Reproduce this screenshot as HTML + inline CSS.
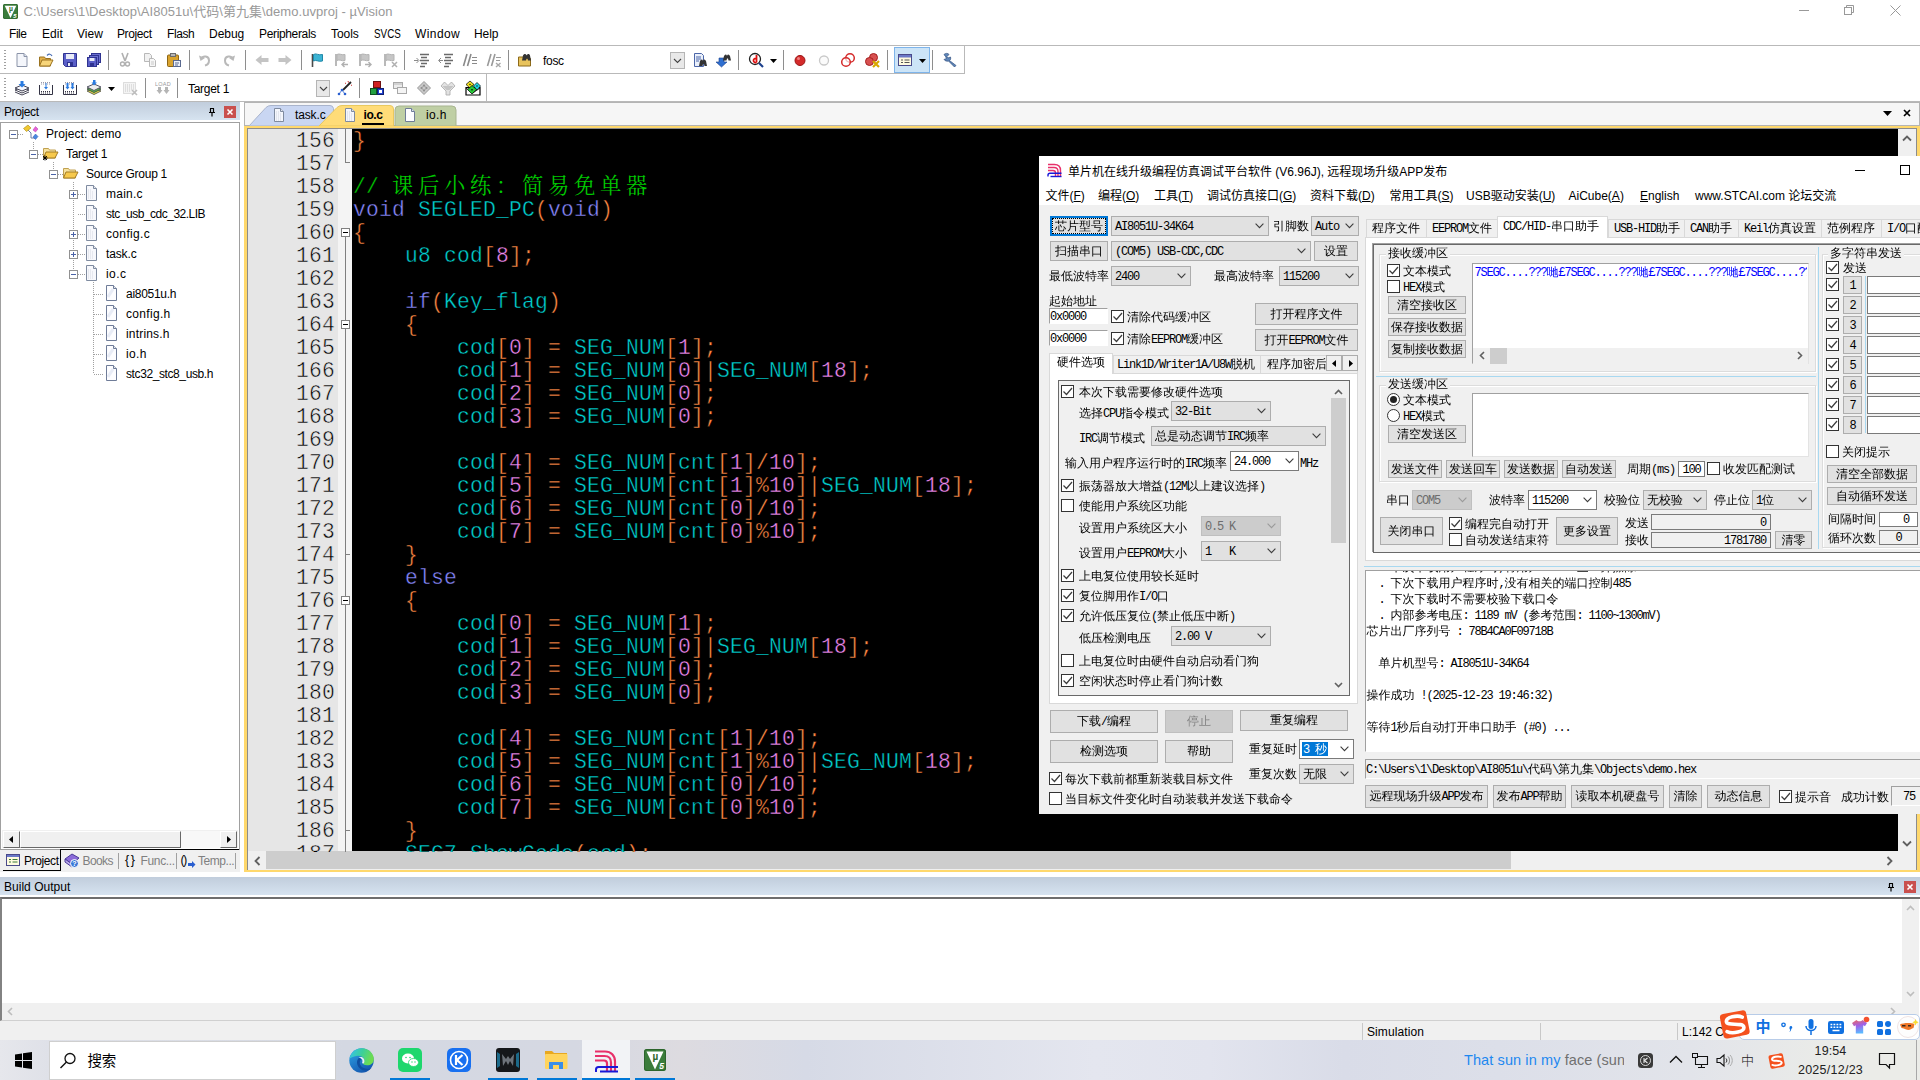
<!DOCTYPE html>
<html lang="zh"><head><meta charset="utf-8"><title>uVision</title>
<style>
*{box-sizing:border-box;margin:0;padding:0}
html,body{width:1920px;height:1080px;overflow:hidden;background:#f0f0f0}
body{position:relative;font-family:"Liberation Sans","Noto Sans CJK SC",sans-serif;font-size:12px;color:#000}
.a{position:absolute}
.t{position:absolute;white-space:pre;line-height:16px;height:16px;letter-spacing:-.3px}
.s{letter-spacing:0;font-family:"Liberation Mono","WenQuanYi Zen Hei","Noto Sans CJK SC",monospace;font-size:12px}
.s i{font-style:normal;font-family:"Liberation Mono",monospace;font-size:12px;letter-spacing:-1.2px}
.y{letter-spacing:0;font-family:"Liberation Sans","Noto Sans CJK SC",sans-serif;font-size:12px}
.btn{position:absolute;background:#e1e1e1;border:1px solid #adadad;text-align:center;white-space:pre;overflow:hidden}
.btn.dis{background:#cccccc;border-color:#bfbfbf;color:#838383}
.cmb{position:absolute;background:#e1e1e1;border:1px solid #adadad;white-space:pre;overflow:hidden}
.cmb.w{background:#fff;border-color:#7a7a7a}
.cmb.dis{background:#cccccc;border-color:#bfbfbf;color:#6d6d6d}
.cmb svg{position:absolute;right:4px;top:50%;margin-top:-3px}
.cb{position:absolute;width:13px;height:13px;background:#fff;border:1px solid #333}
.cb svg{position:absolute;left:0;top:0}
.rd{position:absolute;width:13px;height:13px;background:#fff;border:1px solid #333;border-radius:50%}
.ed{position:absolute;background:#fff;border:1px solid #7a7a7a;white-space:pre;overflow:hidden}
.code{position:absolute;white-space:pre;font-family:"Liberation Mono","Noto Serif CJK SC",monospace;font-size:21.33px;letter-spacing:.2px;line-height:23px;height:23px}
.kw{color:#8888ff}.id{color:#00d0d0}.op{color:#ff8844}.nu{color:#f088f0}.cm{color:#00c800}
.cm b{font-weight:normal;letter-spacing:4.67px;-webkit-text-stroke:0 transparent}
.t.s{margin-top:1px}
.btn.s,.cmb.s,.ed.s{padding-top:1px}

</style></head>
<body>
<div class="a " style="left:0px;top:0px;width:1920px;height:102px;background:#fff"></div>
<svg class="a" style="left:3px;top:4px" width="15" height="15" viewBox="0 0 22 22"><rect width="22" height="22" rx="2.500" fill="#3b7c3b"/><rect x=".5" y=".5" width="21" height="21" rx="2.500" fill="none" stroke="#2d652d"/><path d="M2.500 2.500h17L11 20.500z" fill="#fff"/><text x="11.500" y="10.500" font-size="10" font-weight="bold" text-anchor="middle" fill="#2d652d" font-family="Liberation Sans">µ</text><text x="17.500" y="20" font-size="8.500" font-weight="bold" font-style="italic" text-anchor="middle" fill="#fff" font-family="Liberation Sans">5</text></svg>
<div class="t " style="left:23.5px;top:3.5px;color:#999;font-size:13px;letter-spacing:0.05px">C:\Users\1\Desktop\AI8051u\代码\第九集\demo.uvproj - µVision</div>
<svg class="a" style="left:1790px;top:0" width="130" height="22" viewBox="0 0 130 22"><g stroke="#999" stroke-width="1" fill="none"><path d="M9 10.5h10"/><rect x="54.5" y="7.5" width="7" height="7"/><path d="M56.5 7.5v-2h7v7h-2"/><path d="M100.500 5.500l10 10M110.500 5.500l-10 10"/></g></svg>
<div class="t " style="left:9px;top:26px;letter-spacing:-0.448px;">File</div>
<div class="t " style="left:42px;top:26px;letter-spacing:0.021px;">Edit</div>
<div class="t " style="left:77px;top:26px;letter-spacing:0.068px;">View</div>
<div class="t " style="left:117px;top:26px;letter-spacing:-0.393px;">Project</div>
<div class="t " style="left:167px;top:26px;letter-spacing:-0.398px;">Flash</div>
<div class="t " style="left:209px;top:26px;letter-spacing:-0.031px;">Debug</div>
<div class="t " style="left:259px;top:26px;letter-spacing:-0.345px;">Peripherals</div>
<div class="t " style="left:331px;top:26px;letter-spacing:-0.066px;">Tools</div>
<div class="t " style="left:374px;top:26px;letter-spacing:0px;transform:scaleX(.82);transform-origin:0 0;">SVCS</div>
<div class="t " style="left:415px;top:26px;letter-spacing:0.412px;">Window</div>
<div class="t " style="left:474px;top:26px;letter-spacing:-0.062px;">Help</div>
<div class="a " style="left:0px;top:45px;width:1920px;height:1px;background:#b9b9b9"></div>
<div class="a " style="left:0px;top:73px;width:965px;height:1px;background:#b9b9b9"></div>
<div class="a " style="left:964px;top:45px;width:1px;height:29px;background:#b9b9b9"></div>
<div class="a " style="left:0px;top:101px;width:1920px;height:1px;background:#b9b9b9"></div>
<div class="a " style="left:486px;top:74px;width:1px;height:28px;background:#b9b9b9"></div>
<div class="a " style="left:4px;top:50px;width:2px;height:20px;background:repeating-linear-gradient(#a0a0a0 0 1px,transparent 1px 3px)"></div>
<div class="a " style="left:4px;top:78px;width:2px;height:20px;background:repeating-linear-gradient(#a0a0a0 0 1px,transparent 1px 3px)"></div>
<div class="a " style="left:108px;top:50px;width:1px;height:20px;background:#8e8e8e"></div>
<div class="a " style="left:189px;top:50px;width:1px;height:20px;background:#8e8e8e"></div>
<div class="a " style="left:245px;top:50px;width:1px;height:20px;background:#8e8e8e"></div>
<div class="a " style="left:301px;top:50px;width:1px;height:20px;background:#8e8e8e"></div>
<div class="a " style="left:404px;top:50px;width:1px;height:20px;background:#8e8e8e"></div>
<div class="a " style="left:508px;top:50px;width:1px;height:20px;background:#8e8e8e"></div>
<div class="a " style="left:738px;top:50px;width:1px;height:20px;background:#8e8e8e"></div>
<div class="a " style="left:783px;top:50px;width:1px;height:20px;background:#8e8e8e"></div>
<div class="a " style="left:887px;top:50px;width:1px;height:20px;background:#8e8e8e"></div>
<div class="a " style="left:932px;top:50px;width:1px;height:20px;background:#8e8e8e"></div>
<div class="a " style="left:145px;top:78px;width:1px;height:20px;background:#8e8e8e"></div>
<div class="a " style="left:177px;top:78px;width:1px;height:20px;background:#8e8e8e"></div>
<div class="a " style="left:359px;top:78px;width:1px;height:20px;background:#8e8e8e"></div>
<svg class="a" style="left:14px;top:52px" width="16" height="16" viewBox="0 0 16 16"><path d="M3 1.5h7l3 3v10H3z" fill="#f4f6fb" stroke="#8a93a8"/><path d="M10 1.5v3h3" fill="#dfe4ef" stroke="#8a93a8"/></svg>
<svg class="a" style="left:38px;top:52px" width="16" height="16" viewBox="0 0 16 16"><path d="M1.5 5h5l1 1.5h5V14h-11z" fill="#e2b04a" stroke="#9b7320"/><path d="M1.5 14l2.5-6h11l-3 6z" fill="#f7d57a" stroke="#9b7320"/><path d="M9 3.5c2-2 4-1.5 5 .5" fill="none" stroke="#4a6fb5" stroke-width="1.2"/></svg>
<svg class="a" style="left:62px;top:52px" width="16" height="16" viewBox="0 0 16 16"><path d="M1.5 1.5h13v13h-11l-2-2z" fill="#5a5fc8" stroke="#2f3390"/><rect x="4" y="2" width="8" height="5" fill="#e9ecf7"/><rect x="5" y="10" width="6" height="4.5" fill="#2f3390"/><rect x="6" y="11" width="2" height="3" fill="#e9ecf7"/></svg>
<svg class="a" style="left:86px;top:52px" width="16" height="16" viewBox="0 0 16 16"><rect x="5.5" y="1.5" width="9" height="9" fill="#6a6fd0" stroke="#2f3390"/><rect x="3.5" y="3.5" width="9" height="9" fill="#6a6fd0" stroke="#2f3390"/><rect x="1.5" y="5.5" width="9" height="9" fill="#5a5fc8" stroke="#2f3390"/><rect x="3.5" y="6" width="5" height="3" fill="#e9ecf7"/><rect x="4" y="11" width="4" height="3.5" fill="#2f3390"/></svg>
<svg class="a" style="left:117px;top:52px" width="16" height="16" viewBox="0 0 16 16"><path d="M5 1l3 8M11 1L8 9" stroke="#b0b0b0" stroke-width="1.6" fill="none"/><circle cx="5.5" cy="12" r="2" fill="none" stroke="#b0b0b0" stroke-width="1.4"/><circle cx="10.5" cy="12" r="2" fill="none" stroke="#b0b0b0" stroke-width="1.4"/></svg>
<svg class="a" style="left:142px;top:52px" width="16" height="16" viewBox="0 0 16 16"><path d="M2.5 1.5h5l2 2v6h-7z" fill="#f1f1f1" stroke="#b8b8b8"/><path d="M7.5 6.5h4l2 2v6h-6z" fill="#f6f6f6" stroke="#b8b8b8"/><path d="M9 10h3M9 12h3" stroke="#c8c8c8"/></svg>
<svg class="a" style="left:166px;top:52px" width="16" height="16" viewBox="0 0 16 16"><rect x="1.5" y="3" width="11" height="11.5" rx="1" fill="#d9a32d" stroke="#8d6514"/><rect x="4.5" y="1.5" width="5" height="3" fill="#b7b7b7" stroke="#6c6c6c"/><rect x="7.5" y="8.5" width="7" height="6" fill="#eef2fa" stroke="#5a6a90"/><path d="M9 11h4M9 13h3" stroke="#5a6a90"/></svg>
<svg class="a" style="left:197px;top:52px" width="16" height="16" viewBox="0 0 16 16"><path d="M4 7c2-4 8-3 8 1.5 0 3-2 4.5-4 5" fill="none" stroke="#b9b9b9" stroke-width="2"/><path d="M2 3.5l1.5 5.5 4.5-3z" fill="#b9b9b9"/></svg>
<svg class="a" style="left:221px;top:52px" width="16" height="16" viewBox="0 0 16 16"><path d="M12 7c-2-4-8-3-8 1.5 0 3 2 4.5 4 5" fill="none" stroke="#b9b9b9" stroke-width="2"/><path d="M14 3.5l-1.5 5.5-4.5-3z" fill="#b9b9b9"/></svg>
<svg class="a" style="left:254px;top:52px" width="16" height="16" viewBox="0 0 16 16"><path d="M1.5 8l6-5v3h7v4h-7v3z" fill="#c4c4c4"/></svg>
<svg class="a" style="left:277px;top:52px" width="16" height="16" viewBox="0 0 16 16"><path d="M14.5 8l-6-5v3h-7v4h7v3z" fill="#c4c4c4"/></svg>
<svg class="a" style="left:309px;top:52px" width="16" height="16" viewBox="0 0 16 16"><path d="M3.500 2v13" stroke="#4a4a4a" stroke-width="1.600"/><path d="M4.500 2.500c2.500-1.800 5 1.300 9 0v6.500c-4 1.300-6.500-1.800-9 0z" fill="#3cb4d4" stroke="#2088a8"/></svg>
<svg class="a" style="left:333px;top:52px" width="16" height="16" viewBox="0 0 16 16"><path d="M3 2v12" stroke="#a8a8a8" stroke-width="1.600"/><path d="M4 2.500c2.500-1.500 4.500 1 8 0v6c-3.500 1-5.500-1.500-8 0z" fill="#c6c6c6" stroke="#b4b4b4"/><path d="M15 12.500H9M11.500 10L9 12.500l2.500 2.500" stroke="#b0b0b0" stroke-width="1.400" fill="none"/></svg>
<svg class="a" style="left:357px;top:52px" width="16" height="16" viewBox="0 0 16 16"><path d="M3 2v12" stroke="#a8a8a8" stroke-width="1.600"/><path d="M4 2.500c2.500-1.500 4.500 1 8 0v6c-3.500 1-5.500-1.500-8 0z" fill="#c6c6c6" stroke="#b4b4b4"/><path d="M8 12.500h6M11.500 10l2.500 2.500-2.500 2.500" stroke="#b0b0b0" stroke-width="1.400" fill="none"/></svg>
<svg class="a" style="left:382px;top:52px" width="16" height="16" viewBox="0 0 16 16"><path d="M3 2v12" stroke="#a8a8a8" stroke-width="1.600"/><path d="M4 2.500c2.500-1.500 4.500 1 8 0v6c-3.500 1-5.500-1.500-8 0z" fill="#c6c6c6" stroke="#b4b4b4"/><path d="M10 10l5 5M15 10l-5 5" stroke="#b0b0b0" stroke-width="1.500"/></svg>
<svg class="a" style="left:414px;top:52px" width="16" height="16" viewBox="0 0 16 16"><path d="M6 2.500h9M7 5.500h6M6 8.500h9M7 11.500h6M6 14.500h5" stroke="#6a6a6a" stroke-width="1.300"/><path d="M0 8.500h4M2.500 6l2.500 2.500L2.500 11" stroke="#8a8a8a" fill="none"/></svg>
<svg class="a" style="left:438px;top:52px" width="16" height="16" viewBox="0 0 16 16"><path d="M6 2.500h9M7 5.500h6M6 8.500h9M7 11.500h6M6 14.500h5" stroke="#6a6a6a" stroke-width="1.300"/><path d="M5 8.500H1M3 6L.5 8.500 3 11" stroke="#8a8a8a" fill="none"/></svg>
<svg class="a" style="left:462px;top:52px" width="16" height="16" viewBox="0 0 16 16"><path d="M1.500 14l3.500-12M5.500 14l3.500-12" stroke="#8a8a8a" stroke-width="1.600"/><path d="M10 5.500h5M10 8.500h5M10 11.500h5" stroke="#8a8a8a" stroke-width="1.200"/></svg>
<svg class="a" style="left:486px;top:52px" width="16" height="16" viewBox="0 0 16 16"><path d="M1.500 14l3.500-12M5.500 14l3.500-12" stroke="#9a9a9a" stroke-width="1.600"/><path d="M10 5.500h5M10 8.500h4" stroke="#9a9a9a" stroke-width="1.200"/><path d="M10 11l4.500 4M14.500 11l-4.500 4" stroke="#a8a8a8" stroke-width="1.400"/></svg>
<svg class="a" style="left:517px;top:52px" width="16" height="16" viewBox="0 0 16 16"><path d="M1.500 5h5l1 1.500h6V14h-12z" fill="#e8c35c" stroke="#8d6a1a"/><path d="M6 3.500c1-2 3-2 3.500 0 1-2 3-2 3.500 0l1 5h-3l-.5-2h-1l-.5 2H5z" fill="#333"/></svg>
<div class="t " style="left:543px;top:53px;">fosc</div>
<div class="a " style="left:670px;top:52px;width:15px;height:17px;border:1px solid #b5b5b5;background:#e8e8e8"></div>
<svg class="a" style="left:673px;top:57.5px" width="9" height="6" viewBox="0 0 9 6"><path d="M1 1l3.500 3.500L8 1" fill="none" stroke="#444" stroke-width="1.1"/></svg>
<svg class="a" style="left:692px;top:52px" width="16" height="16" viewBox="0 0 16 16"><path d="M2.500 1.500h7l2 2v11h-9z" fill="#eaf0fb" stroke="#4c66a8"/><path d="M4 5h5M4 7h5M4 9h3" stroke="#4c66a8"/><path d="M8 9c1-2 2.500-2 3 0 .5-2 2-2 3 0l1 5h-2.500l-.5-2h-1l-.5 2H7z" fill="#333"/></svg>
<svg class="a" style="left:716px;top:52px" width="16" height="16" viewBox="0 0 16 16"><path d="M3 6h5v4h3l-5.500 5L0 10h3z" fill="#2f6fd0" stroke="#1b3f8c" stroke-width=".6"/><path d="M8 4c1-2 2.500-2 3 0 .5-2 2-2 3 0l1 4.500h-2.500l-.5-2h-1l-.5 2H7z" fill="#333"/></svg>
<svg class="a" style="left:748px;top:52px" width="16" height="16" viewBox="0 0 16 16"><circle cx="7" cy="7" r="5.500" fill="#fff" stroke="#222" stroke-width="1.300"/><path d="M11 11l4 4" stroke="#1b3f8c" stroke-width="2.200"/><path d="M8.500 3v7.500M8.500 10.500c-4 1-4-5 0-4" fill="none" stroke="#e01010" stroke-width="1.800"/></svg>
<svg class="a" style="left:769.5px;top:59px" width="7" height="4" viewBox="0 0 7 4"><path d="M0 0h7L3.500 4z" fill="#000"/></svg>
<svg class="a" style="left:792px;top:52px" width="16" height="16" viewBox="0 0 16 16"><circle cx="8" cy="8.500" r="5" fill="#d42a2a" stroke="#9a1414"/><circle cx="6.500" cy="6.500" r="1.500" fill="#f08080"/></svg>
<svg class="a" style="left:816px;top:52px" width="16" height="16" viewBox="0 0 16 16"><circle cx="8" cy="8.500" r="4.500" fill="#fbfbfb" stroke="#c9c9c9" stroke-width="1.300"/></svg>
<svg class="a" style="left:840px;top:52px" width="16" height="16" viewBox="0 0 16 16"><circle cx="10" cy="6" r="4.300" fill="#fff" stroke="#d42a2a" stroke-width="1.500"/><circle cx="6" cy="10" r="4.300" fill="#fff" fill-opacity=".7" stroke="#d42a2a" stroke-width="1.500"/></svg>
<svg class="a" style="left:864px;top:52px" width="16" height="16" viewBox="0 0 16 16"><circle cx="9.500" cy="5.500" r="4" fill="#d85050" stroke="#a52020"/><circle cx="5.500" cy="9.500" r="4" fill="#d85050" stroke="#a52020"/><path d="M9 9l6 6M15 9l-6 6" stroke="#d8a800" stroke-width="2.200"/></svg>
<div class="a " style="left:894px;top:47px;width:36px;height:26px;background:#cce4f7;border:1px solid #7eb4ea"></div>
<svg class="a" style="left:897px;top:52px" width="16" height="16" viewBox="0 0 16 16"><rect x="1.500" y="2.500" width="13" height="11" fill="#fffbe0" stroke="#4a4a8a"/><rect x="2" y="3" width="12" height="2.500" fill="#6a78c8"/><path d="M4 8h2M4 10.500h2M7.500 8h5M7.500 10.500h5" stroke="#555"/></svg>
<svg class="a" style="left:918.5px;top:59px" width="7" height="4" viewBox="0 0 7 4"><path d="M0 0h7L3.500 4z" fill="#000"/></svg>
<svg class="a" style="left:942px;top:52px" width="16" height="16" viewBox="0 0 16 16"><path d="M2 2.500c1.500-1.500 4-1.500 5 0L5 4.500l1 1.500 2.500-1c.5 1.500 0 3-1 3.500l6.500 5-1.500 1.500-6-6c-1.500.5-3.500 0-4.500-1.500l2.500-1-1-2z" fill="#5f86b8" stroke="#2f4f7f" stroke-width=".7"/></svg>
<svg class="a" style="left:14px;top:80px" width="16" height="16" viewBox="0 0 16 16"><path d="M1 10l7-3 7 3-7 3z" fill="#fff" stroke="#445"/><path d="M1 12l7 3 7-3" fill="none" stroke="#445"/><path d="M1 8l7-3 7 3-7 3z" fill="#f6f8ff" stroke="#445"/><path d="M6.500 1h3v3h2L8 7.500 4.500 4h2z" fill="#2a7be0"/></svg>
<svg class="a" style="left:38px;top:80px" width="16" height="16" viewBox="0 0 16 16"><path d="M1.500 5v9.500h13V5" fill="#fff" stroke="#334"/><path d="M3 11.500h10M3 13h10" stroke="#334" stroke-dasharray="1 1"/><path d="M3 2.500h10M3 4h10" stroke="#99a" stroke-dasharray="1 1"/><path d="M7.500 3v4h-1.500L8 9.500 10 7H8.500V3z" fill="#2a7be0"/></svg>
<svg class="a" style="left:62px;top:80px" width="16" height="16" viewBox="0 0 16 16"><path d="M1.500 5v9.500h13V5" fill="#fff" stroke="#334"/><path d="M3 11.500h10M3 13h10" stroke="#334" stroke-dasharray="1 1"/><path d="M3 2.500h10M3 4h10" stroke="#99a" stroke-dasharray="1 1"/><path d="M4.500 3v4H3.500L5.500 9.500 7.500 7h-1V3zM9.500 3v4h-1l2 2.500 2-2.500h-1V3z" fill="#2a7be0"/></svg>
<svg class="a" style="left:86px;top:80px" width="16" height="16" viewBox="0 0 16 16"><path d="M1 11l7 3.500 7-3.500-7-3z" fill="#e6e04a" stroke="#665"/><path d="M1 9l7 3.500L15 9 8 6z" fill="#58b848" stroke="#454"/><path d="M1 7l7 3.500L15 7 8 4z" fill="#eee" stroke="#556"/><path d="M7 0h2.500v2.500h1.500L8 5.500 5.500 2.500H7z" fill="#2a7be0"/></svg>
<svg class="a" style="left:107.5px;top:87px" width="7" height="4" viewBox="0 0 7 4"><path d="M0 0h7L3.500 4z" fill="#000"/></svg>
<svg class="a" style="left:122px;top:80px" width="16" height="16" viewBox="0 0 16 16"><path d="M1.500 2.500h12v11h-12z" fill="#f4f4f4" stroke="#c0c0c0" stroke-dasharray="1 1"/><path d="M3 5h9M3 7h9M3 9h9M3 11h6" stroke="#c8c8c8" stroke-dasharray="1 1"/><path d="M10 10l5 5M15 10l-5 5" stroke="#bdbdbd" stroke-width="1.600"/></svg>
<svg class="a" style="left:155px;top:80px" width="16" height="16" viewBox="0 0 16 16"><path d="M3 7h3v3h1.500L4.500 14 1.500 10H3zM10 7h3v3h1.500L11.500 14 8.500 10H10z" fill="#b5b5b5"/><text x="8" y="5.500" font-size="5.500" font-family="Liberation Sans" text-anchor="middle" fill="#9a9a9a" letter-spacing=".3">LOAD</text></svg>
<div class="t " style="left:188px;top:81px;letter-spacing:-0.294px;">Target 1</div>
<div class="a " style="left:316px;top:80px;width:14px;height:17px;border:1px solid #b5b5b5;background:#e8e8e8"></div>
<svg class="a" style="left:318.5px;top:85.5px" width="9" height="6" viewBox="0 0 9 6"><path d="M1 1l3.500 3.500L8 1" fill="none" stroke="#444" stroke-width="1.100"/></svg>
<svg class="a" style="left:337px;top:80px" width="16" height="16" viewBox="0 0 16 16"><path d="M14 2L6 10" stroke="#222" stroke-width="1.800"/><path d="M11 1l.5 1.500M14 5l1 .5M9 3.500l-1-.5" stroke="#d03030"/><circle cx="5" cy="10" r="1.300" fill="#2a5fd0"/><circle cx="2" cy="14" r="1.300" fill="#2a5fd0"/><circle cx="8" cy="14" r="1.300" fill="#2a5fd0"/><path d="M5 10l-3 4M5 10l3 4" stroke="#2a5fd0" stroke-width=".8"/></svg>
<svg class="a" style="left:369px;top:80px" width="16" height="16" viewBox="0 0 16 16"><rect x="4.500" y="1.500" width="7" height="6" fill="#d02020" stroke="#701010"/><rect x="1.500" y="8.500" width="6" height="6" fill="#20a040" stroke="#105020"/><rect x="8.500" y="8.500" width="6" height="6" fill="#2040d0" stroke="#102070"/><rect x="10" y="10" width="3" height="3" fill="#fff"/></svg>
<svg class="a" style="left:392px;top:80px" width="16" height="16" viewBox="0 0 16 16"><rect x="1.500" y="2.500" width="9" height="6" fill="#ececec" stroke="#a8a8a8"/><rect x="5.500" y="7.500" width="9" height="6" fill="#f4f4f4" stroke="#a8a8a8"/><path d="M2 4h8" stroke="#b8b8b8"/></svg>
<svg class="a" style="left:416px;top:80px" width="16" height="16" viewBox="0 0 16 16"><path d="M8 1.500l6.500 6.500L8 14.500 1.500 8z" fill="#c9c9c9" stroke="#9a9a9a"/><path d="M8 4l1.500 2.500h-3zM8 12l1.500-2.500h-3zM4 8l2.500-1.500v3zM12 8l-2.500-1.500v3z" fill="#8a8a8a"/></svg>
<svg class="a" style="left:440px;top:80px" width="16" height="16" viewBox="0 0 16 16"><path d="M1 6l3.500-4L8 5.500 11.500 2 15 6l-5 5v4H6v-4z" fill="#e2e2e2" stroke="#a8a8a8" stroke-width=".8"/><path d="M2.500 6h11l-4 4h-3z" fill="#c4c4c4"/></svg>
<svg class="a" style="left:465px;top:80px" width="16" height="16" viewBox="0 0 16 16"><path d="M1 7.500h14v7.500H1z" fill="#fff" stroke="#000" stroke-width="1.200"/><path d="M1 8l7 5 7-5" fill="none" stroke="#000" stroke-width=".8"/><path d="M5 1l4 3.500-4 3.500-4-3.500z" fill="#f0e020" stroke="#000" stroke-width=".7"/><path d="M12 2.500l3.500 3.500-3.500 4-3.500-4z" fill="#20d8e8" stroke="#000" stroke-width=".7"/><path d="M7 5.500l4.500 4-4.500 4.500-4.500-4.500z" fill="#28c838" stroke="#000" stroke-width=".7"/><circle cx="5" cy="4.500" r=".7"/><circle cx="12" cy="6" r=".7"/><circle cx="7" cy="9.700" r=".8"/></svg>
<div class="a " style="left:0px;top:102px;width:240px;height:18px;background:linear-gradient(#c1cddc,#d6e3f0)"></div>
<div class="a " style="left:0px;top:120px;width:240px;height:3px;background:#fff"></div>
<div class="t " style="left:4px;top:103.5px;letter-spacing:-0.393px;">Project</div>
<svg class="a" style="left:205.5px;top:106px" width="12" height="12" viewBox="0 0 12 12"><path d="M4 2.500h4M4.500 2.500v4M7.500 2.500v4M3 6.500h6M6 6.500v4" stroke="#000" stroke-width="1.200" fill="none"/></svg>
<div class="a " style="left:224px;top:106px;width:12px;height:12px;background:#c9504e"></div>
<svg class="a" style="left:226px;top:108px" width="8" height="8" viewBox="0 0 8 8"><path d="M1.500 1.500l5 5M6.500 1.500l-5 5" stroke="#fff" stroke-width="1.600"/></svg>
<div class="a " style="left:0px;top:122px;width:240px;height:728px;background:#fff;border:1px solid #a0a0a0"></div>
<div class="a " style="left:240px;top:102px;width:4px;height:775px;background:#fff"></div>
<div class="a " style="left:18px;top:134px;width:6px;height:1px;background:repeating-linear-gradient(90deg,#a0a0a0 0 1px,transparent 1px 2px)"></div>
<div class="a " style="left:33px;top:142px;width:1px;height:8px;background:repeating-linear-gradient(#a0a0a0 0 1px,transparent 1px 2px)"></div>
<div class="a " style="left:38px;top:154px;width:5px;height:1px;background:repeating-linear-gradient(90deg,#a0a0a0 0 1px,transparent 1px 2px)"></div>
<div class="a " style="left:53px;top:162px;width:1px;height:8px;background:repeating-linear-gradient(#a0a0a0 0 1px,transparent 1px 2px)"></div>
<div class="a " style="left:58px;top:174px;width:5px;height:1px;background:repeating-linear-gradient(90deg,#a0a0a0 0 1px,transparent 1px 2px)"></div>
<div class="a " style="left:73px;top:182px;width:1px;height:92px;background:repeating-linear-gradient(#a0a0a0 0 1px,transparent 1px 2px)"></div>
<div class="a " style="left:93px;top:282px;width:1px;height:92px;background:repeating-linear-gradient(#a0a0a0 0 1px,transparent 1px 2px)"></div>
<div class="a " style="left:78px;top:194px;width:7px;height:1px;background:repeating-linear-gradient(90deg,#a0a0a0 0 1px,transparent 1px 2px)"></div>
<div class="a " style="left:78px;top:214px;width:7px;height:1px;background:repeating-linear-gradient(90deg,#a0a0a0 0 1px,transparent 1px 2px)"></div>
<div class="a " style="left:78px;top:234px;width:7px;height:1px;background:repeating-linear-gradient(90deg,#a0a0a0 0 1px,transparent 1px 2px)"></div>
<div class="a " style="left:78px;top:254px;width:7px;height:1px;background:repeating-linear-gradient(90deg,#a0a0a0 0 1px,transparent 1px 2px)"></div>
<div class="a " style="left:78px;top:274px;width:7px;height:1px;background:repeating-linear-gradient(90deg,#a0a0a0 0 1px,transparent 1px 2px)"></div>
<div class="a " style="left:94px;top:294px;width:9px;height:1px;background:repeating-linear-gradient(90deg,#a0a0a0 0 1px,transparent 1px 2px)"></div>
<div class="a " style="left:94px;top:314px;width:9px;height:1px;background:repeating-linear-gradient(90deg,#a0a0a0 0 1px,transparent 1px 2px)"></div>
<div class="a " style="left:94px;top:334px;width:9px;height:1px;background:repeating-linear-gradient(90deg,#a0a0a0 0 1px,transparent 1px 2px)"></div>
<div class="a " style="left:94px;top:354px;width:9px;height:1px;background:repeating-linear-gradient(90deg,#a0a0a0 0 1px,transparent 1px 2px)"></div>
<div class="a " style="left:94px;top:374px;width:9px;height:1px;background:repeating-linear-gradient(90deg,#a0a0a0 0 1px,transparent 1px 2px)"></div>
<svg class="a" style="left:9px;top:130px" width="9" height="9" viewBox="0 0 9 9"><rect x=".5" y=".5" width="8" height="8" fill="#fff" stroke="#919191"/><path d="M2 4.500h5" stroke="#4b63a7"/></svg>
<svg class="a" style="left:29px;top:150px" width="9" height="9" viewBox="0 0 9 9"><rect x=".5" y=".5" width="8" height="8" fill="#fff" stroke="#919191"/><path d="M2 4.500h5" stroke="#4b63a7"/></svg>
<svg class="a" style="left:49px;top:170px" width="9" height="9" viewBox="0 0 9 9"><rect x=".5" y=".5" width="8" height="8" fill="#fff" stroke="#919191"/><path d="M2 4.500h5" stroke="#4b63a7"/></svg>
<svg class="a" style="left:23px;top:123.5px" width="16" height="17" viewBox="0 0 16 17"><path d="M4.500 5.500L8 9v5h4" fill="none" stroke="#6a7fa8" stroke-width="1"/><path d="M0.500 4.500L5 1l3 3-4.500 3.500z" fill="#f0c830" stroke="#a88a18" stroke-width=".6"/><path d="M10 6l2.500-3.500L15 5l-2.500 3z" fill="#e860d8" stroke="#b040a8" stroke-width=".5"/><path d="M10 13l2.500-3L15 12.500 12.500 15.500z" fill="#4a88e0" stroke="#2a58b0" stroke-width=".5"/></svg>
<div class="t " style="left:46px;top:126px;letter-spacing:0.096px;">Project: demo</div>
<svg class="a" style="left:43px;top:144.5px" width="16" height="16" viewBox="0 0 16 16"><path d="M.5 3.500h5l1 1.500h6V13H.5z" fill="#f6e2a0" stroke="#c0a050"/><path d="M.5 13l2.500-6h12l-3 6z" fill="#f7c94c" stroke="#a27c26"/><path d="M0 11l4 4M4 11l-4 4M2 10.500v5M-.5 13h5" stroke="#000" stroke-width=".9"/></svg>
<div class="t " style="left:66px;top:146px;letter-spacing:-0.294px;">Target 1</div>
<svg class="a" style="left:63px;top:164.5px" width="16" height="16" viewBox="0 0 16 16"><path d="M.5 3.500h5l1 1.500h6V13H.5z" fill="#f6e2a0" stroke="#c0a050"/><path d="M.5 13l2.500-6h12l-3 6z" fill="#f7c94c" stroke="#a27c26"/></svg>
<div class="t " style="left:86px;top:166px;letter-spacing:-0.263px;">Source Group 1</div>
<svg class="a" style="left:69px;top:190px" width="9" height="9" viewBox="0 0 9 9"><rect x=".5" y=".5" width="8" height="8" fill="#fff" stroke="#919191"/><path d="M2 4.500h5M4.500 2v5" stroke="#4b63a7"/></svg>
<svg class="a" style="left:83.5px;top:185px" width="15" height="16" viewBox="0 0 15 16"><path d="M2.500 .5h7l3 3v12h-10z" fill="#f7f8fc" stroke="#7f8ba0"/><path d="M9.500 .5v3h3" fill="#e6e9f0" stroke="#7f8ba0"/><path d="M4 5h4M4 7h6M4 9h6M4 11h6M4 13h6" stroke="#d6d9e2" stroke-dasharray="1 1"/></svg>
<div class="t " style="left:106px;top:186px;letter-spacing:0.251px;">main.c</div>
<svg class="a" style="left:83.5px;top:205px" width="15" height="16" viewBox="0 0 15 16"><path d="M2.500 .5h7l3 3v12h-10z" fill="#f7f8fc" stroke="#7f8ba0"/><path d="M9.500 .5v3h3" fill="#e6e9f0" stroke="#7f8ba0"/><path d="M4 5h4M4 7h6M4 9h6M4 11h6M4 13h6" stroke="#d6d9e2" stroke-dasharray="1 1"/></svg>
<div class="t " style="left:106px;top:206px;letter-spacing:-0.499px;">stc_usb_cdc_32.LIB</div>
<svg class="a" style="left:69px;top:230px" width="9" height="9" viewBox="0 0 9 9"><rect x=".5" y=".5" width="8" height="8" fill="#fff" stroke="#919191"/><path d="M2 4.500h5M4.500 2v5" stroke="#4b63a7"/></svg>
<svg class="a" style="left:83.5px;top:225px" width="15" height="16" viewBox="0 0 15 16"><path d="M2.500 .5h7l3 3v12h-10z" fill="#f7f8fc" stroke="#7f8ba0"/><path d="M9.500 .5v3h3" fill="#e6e9f0" stroke="#7f8ba0"/><path d="M4 5h4M4 7h6M4 9h6M4 11h6M4 13h6" stroke="#d6d9e2" stroke-dasharray="1 1"/></svg>
<div class="t " style="left:106px;top:226px;letter-spacing:0.349px;">config.c</div>
<svg class="a" style="left:69px;top:250px" width="9" height="9" viewBox="0 0 9 9"><rect x=".5" y=".5" width="8" height="8" fill="#fff" stroke="#919191"/><path d="M2 4.500h5M4.500 2v5" stroke="#4b63a7"/></svg>
<svg class="a" style="left:83.5px;top:245px" width="15" height="16" viewBox="0 0 15 16"><path d="M2.500 .5h7l3 3v12h-10z" fill="#f7f8fc" stroke="#7f8ba0"/><path d="M9.500 .5v3h3" fill="#e6e9f0" stroke="#7f8ba0"/><path d="M4 5h4M4 7h6M4 9h6M4 11h6M4 13h6" stroke="#d6d9e2" stroke-dasharray="1 1"/></svg>
<div class="t " style="left:106px;top:246px;letter-spacing:-0.129px;">task.c</div>
<svg class="a" style="left:69px;top:270px" width="9" height="9" viewBox="0 0 9 9"><rect x=".5" y=".5" width="8" height="8" fill="#fff" stroke="#919191"/><path d="M2 4.500h5" stroke="#4b63a7"/></svg>
<svg class="a" style="left:83.5px;top:265px" width="15" height="16" viewBox="0 0 15 16"><path d="M2.500 .5h7l3 3v12h-10z" fill="#f7f8fc" stroke="#7f8ba0"/><path d="M9.500 .5v3h3" fill="#e6e9f0" stroke="#7f8ba0"/><path d="M4 5h4M4 7h6M4 9h6M4 11h6M4 13h6" stroke="#d6d9e2" stroke-dasharray="1 1"/></svg>
<div class="t " style="left:106px;top:266px;letter-spacing:0.404px;">io.c</div>
<svg class="a" style="left:103.5px;top:285px" width="15" height="16" viewBox="0 0 15 16"><path d="M2.500 .5h7l3 3v12h-10z" fill="#fdfdff" stroke="#6f7c98"/><path d="M9.500 .5v3h3" fill="#e6e9f0" stroke="#6f7c98"/><path d="M4 12l5-8" stroke="#e8ecf6" stroke-width="3"/></svg>
<div class="t " style="left:126px;top:286px;letter-spacing:-0.29px;">ai8051u.h</div>
<svg class="a" style="left:103.5px;top:305px" width="15" height="16" viewBox="0 0 15 16"><path d="M2.500 .5h7l3 3v12h-10z" fill="#fdfdff" stroke="#6f7c98"/><path d="M9.500 .5v3h3" fill="#e6e9f0" stroke="#6f7c98"/><path d="M4 12l5-8" stroke="#e8ecf6" stroke-width="3"/></svg>
<div class="t " style="left:126px;top:306px;letter-spacing:0.324px;">config.h</div>
<svg class="a" style="left:103.5px;top:325px" width="15" height="16" viewBox="0 0 15 16"><path d="M2.500 .5h7l3 3v12h-10z" fill="#fdfdff" stroke="#6f7c98"/><path d="M9.500 .5v3h3" fill="#e6e9f0" stroke="#6f7c98"/><path d="M4 12l5-8" stroke="#e8ecf6" stroke-width="3"/></svg>
<div class="t " style="left:126px;top:326px;letter-spacing:0.184px;">intrins.h</div>
<svg class="a" style="left:103.5px;top:345px" width="15" height="16" viewBox="0 0 15 16"><path d="M2.500 .5h7l3 3v12h-10z" fill="#fdfdff" stroke="#6f7c98"/><path d="M9.500 .5v3h3" fill="#e6e9f0" stroke="#6f7c98"/><path d="M4 12l5-8" stroke="#e8ecf6" stroke-width="3"/></svg>
<div class="t " style="left:126px;top:346px;letter-spacing:0.347px;">io.h</div>
<svg class="a" style="left:103.5px;top:365px" width="15" height="16" viewBox="0 0 15 16"><path d="M2.500 .5h7l3 3v12h-10z" fill="#fdfdff" stroke="#6f7c98"/><path d="M9.500 .5v3h3" fill="#e6e9f0" stroke="#6f7c98"/><path d="M4 12l5-8" stroke="#e8ecf6" stroke-width="3"/></svg>
<div class="t " style="left:126px;top:366px;letter-spacing:-0.4px;">stc32_stc8_usb.h</div>
<div class="a " style="left:2px;top:830px;width:236px;height:18px;background:#f0f0f0"></div>
<div class="a " style="left:3px;top:831px;width:17px;height:17px;background:#f0f0f0;border:1px solid #fff;border-right-color:#696969;border-bottom-color:#696969"></div>
<svg class="a" style="left:8.5px;top:836px" width="4" height="7" viewBox="0 0 4 7"><path d="M4 0v7L0 3.500z" fill="#000"/></svg>
<div class="a " style="left:20px;top:831px;width:161px;height:17px;background:#f0f0f0;border:1px solid #fff;border-right-color:#696969;border-bottom-color:#696969"></div>
<div class="a " style="left:220px;top:831px;width:17px;height:17px;background:#f0f0f0;border:1px solid #fff;border-right-color:#696969;border-bottom-color:#696969"></div>
<svg class="a" style="left:226.5px;top:836px" width="4" height="7" viewBox="0 0 4 7"><path d="M0 0v7l4-3.500z" fill="#000"/></svg>
<div class="a " style="left:181px;top:831px;width:39px;height:17px;background:#f8f8f8"></div>
<div class="a " style="left:0px;top:850px;width:240px;height:22px;background:#f0f0f0"></div>
<div class="a " style="left:60px;top:849px;width:179px;height:1px;background:#000"></div>
<div class="a " style="left:3px;top:850px;width:58px;height:21px;background:#f0f0f0;border:1px solid #000;border-top:none;border-left:none"></div>
<svg class="a" style="left:6px;top:854px" width="14" height="12" viewBox="0 0 14 12"><rect x=".5" y=".5" width="13" height="11" fill="#fffbe0" stroke="#4a4a8a"/><rect x="1" y="1" width="12" height="2" fill="#6a78c8"/><path d="M3 5.500h2M3 8h2M6.500 5.500h5M6.500 8h5" stroke="#3a7a3a"/></svg>
<div class="t " style="left:24px;top:853px;letter-spacing:-0.393px;">Project</div>
<svg class="a" style="left:64px;top:852px" width="16" height="16" viewBox="0 0 16 16"><path d="M1 7l7-5 7 4-7 6z" fill="#8a6ad8" stroke="#4a3a98"/><path d="M1 7v3l7 5v-3z" fill="#b8a8e8" stroke="#4a3a98"/><circle cx="10.500" cy="11.500" r="4" fill="#3a78d8" stroke="#fff"/><text x="10.500" y="14" font-size="7" font-weight="bold" text-anchor="middle" fill="#fff" font-family="Liberation Sans">?</text></svg>
<div class="t " style="left:82.5px;top:853px;letter-spacing:-0.6px;color:#808080">Books</div>
<div class="a " style="left:118px;top:853px;width:1px;height:16px;background:#a0a0a0"></div>
<div class="t " style="left:125px;top:851.5px;font-size:12.500px;letter-spacing:1.500px">{}</div>
<div class="t " style="left:140.5px;top:853px;letter-spacing:-0.35px;color:#808080">Func...</div>
<div class="a " style="left:176px;top:853px;width:1px;height:16px;background:#a0a0a0"></div>
<div class="t " style="left:180.5px;top:851.5px;font-size:12px;letter-spacing:-1.200px">()</div>
<svg class="a" style="left:187.5px;top:860.5px" width="8" height="7" viewBox="0 0 8 7"><path d="M0 2h4V0l3.500 3.500L4 7V5H0z" fill="#2a5fd0"/></svg>
<div class="t " style="left:198px;top:853px;letter-spacing:-0.45px;color:#808080">Temp...</div>
<div class="a " style="left:235px;top:853px;width:1px;height:16px;background:#a0a0a0"></div>
<div class="a " style="left:244px;top:102px;width:1676px;height:24px;background:#f6f6f6;border:1px solid #b4b4b4"></div>
<svg class="a" style="left:244px;top:103px" width="230" height="23" viewBox="0 0 230 23"><path d="M5 23 L22 4.500 Q24 2.500 27 2.500 L86 2.500 Q89 2.500 89.500 5.500 L89.500 23 Z" fill="#c9d6f2" stroke="#a9b4cc"/><path d="M151 23 L151 7 Q151 3 155 3 L208 3 Q212 3 212 7 L212 23 Z" fill="#bfcfa4" stroke="#a8b590"/><path d="M75 23 L93 4.500 Q95 2.500 98 2.500 L146 2.500 Q149.500 2.500 149.500 6 L149.500 23 Z" fill="#ffdc78" stroke="#e8c860"/></svg>
<svg class="a" style="left:273px;top:107.5px" width="12" height="14" viewBox="0 0 12 14"><path d="M1.500 .5h6l3 3v10h-9z" fill="#f4f6fc" stroke="#7f8ba0"/><path d="M7.500 .5v3h3" fill="#e0e4ee" stroke="#7f8ba0"/><path d="M3 4h3M3 6h5M3 8h5M3 10h5M3 12h5" stroke="#d0d4e0" stroke-dasharray="1 1"/></svg>
<div class="t " style="left:295px;top:107px;letter-spacing:-0.129px;">task.c</div>
<svg class="a" style="left:344px;top:107.5px" width="12" height="14" viewBox="0 0 12 14"><path d="M1.500 .5h6l3 3v10h-9z" fill="#f4f6fc" stroke="#7f8ba0"/><path d="M7.500 .5v3h3" fill="#e0e4ee" stroke="#7f8ba0"/><path d="M3 4h3M3 6h5M3 8h5M3 10h5M3 12h5" stroke="#d0d4e0" stroke-dasharray="1 1"/></svg>
<div class="t " style="left:363.5px;top:107px;font-weight:bold;letter-spacing:-0.4px">io.c</div>
<div class="a " style="left:362px;top:123px;width:22px;height:1.5px;background:#000"></div>
<svg class="a" style="left:404px;top:107.5px" width="12" height="14" viewBox="0 0 12 14"><path d="M1.500 .5h6l3 3v10h-9z" fill="#fdfdff" stroke="#6f7c98"/><path d="M7.500 .5v3h3" fill="#e0e4ee" stroke="#6f7c98"/></svg>
<div class="t " style="left:426px;top:107px;letter-spacing:0.347px;">io.h</div>
<svg class="a" style="left:1883px;top:111px" width="9" height="5" viewBox="0 0 9 5"><path d="M0 0h9L4.500 5z" fill="#000"/></svg>
<svg class="a" style="left:1902.5px;top:109px" width="8" height="8" viewBox="0 0 8 8"><path d="M1 1l6 6M7 1L1 7" stroke="#000" stroke-width="1.700"/></svg>
<div class="a " style="left:244px;top:126px;width:1676px;height:746px;background:#ffd86c"></div>
<div class="a " style="left:247px;top:128px;width:1670px;height:742px;background:#fff;border:1px solid #8c8c8c"></div>
<div class="a " style="left:248px;top:129px;width:90px;height:723px;background:#e6e6e6"></div>
<div class="a " style="left:338px;top:129px;width:14px;height:723px;background:#f4f4f4"></div>
<div class="a " style="left:352px;top:129px;width:1546px;height:723px;background:#000"></div>
<div class="a " style="left:1898px;top:129px;width:18px;height:723px;background:#f0f0f0"></div>
<svg class="a" style="left:1902px;top:135px" width="10" height="7" viewBox="0 0 10 7"><path d="M1 5.500L5 1.500l4 4" fill="none" stroke="#606060" stroke-width="1.800"/></svg>
<svg class="a" style="left:1902px;top:839.5px" width="10" height="7" viewBox="0 0 10 7"><path d="M1 1.500l4 4 4-4" fill="none" stroke="#606060" stroke-width="1.800"/></svg>
<div class="a " style="left:248px;top:851px;width:1668px;height:19px;background:#f0f0f0"></div>
<div class="a " style="left:266px;top:851px;width:1245px;height:18px;background:#cdcdcd"></div>
<svg class="a" style="left:253.5px;top:855.5px" width="7" height="10" viewBox="0 0 7 10"><path d="M5.500 1l-4 4 4 4" fill="none" stroke="#606060" stroke-width="1.800"/></svg>
<svg class="a" style="left:1886px;top:855.5px" width="7" height="10" viewBox="0 0 7 10"><path d="M1.500 1l4 4-4 4" fill="none" stroke="#606060" stroke-width="1.800"/></svg>
<div class="a" style="left:248px;top:129px;width:1650px;height:723px;overflow:hidden">
<div class="code" style="left:48px;top:1px;color:#000;-webkit-text-stroke:.5px #e6e6e6">156</div>
<div class="code" style="left:105px;top:1px;-webkit-text-stroke:.4px #000"><span class="op">}</span></div>
<div class="code" style="left:48px;top:24px;color:#000;-webkit-text-stroke:.5px #e6e6e6">157</div>
<div class="code" style="left:48px;top:47px;color:#000;-webkit-text-stroke:.5px #e6e6e6">158</div>
<div class="code" style="left:105px;top:47px;-webkit-text-stroke:.4px #000"><span class="cm">// <b>课后小练：简易免单器</b></span></div>
<div class="code" style="left:48px;top:70px;color:#000;-webkit-text-stroke:.5px #e6e6e6">159</div>
<div class="code" style="left:105px;top:70px;-webkit-text-stroke:.4px #000"><span class="kw">void</span> <span class="id">SEGLED_PC</span><span class="op">(</span><span class="kw">void</span><span class="op">)</span></div>
<div class="code" style="left:48px;top:93px;color:#000;-webkit-text-stroke:.5px #e6e6e6">160</div>
<div class="code" style="left:105px;top:93px;-webkit-text-stroke:.4px #000"><span class="op">{</span></div>
<div class="code" style="left:48px;top:116px;color:#000;-webkit-text-stroke:.5px #e6e6e6">161</div>
<div class="code" style="left:105px;top:116px;-webkit-text-stroke:.4px #000">    <span class="id">u8</span> <span class="id">cod</span><span class="op">[</span><span class="nu">8</span><span class="op">]</span><span class="op">;</span></div>
<div class="code" style="left:48px;top:139px;color:#000;-webkit-text-stroke:.5px #e6e6e6">162</div>
<div class="code" style="left:48px;top:162px;color:#000;-webkit-text-stroke:.5px #e6e6e6">163</div>
<div class="code" style="left:105px;top:162px;-webkit-text-stroke:.4px #000">    <span class="kw">if</span><span class="op">(</span><span class="id">Key_flag</span><span class="op">)</span></div>
<div class="code" style="left:48px;top:185px;color:#000;-webkit-text-stroke:.5px #e6e6e6">164</div>
<div class="code" style="left:105px;top:185px;-webkit-text-stroke:.4px #000">    <span class="op">{</span></div>
<div class="code" style="left:48px;top:208px;color:#000;-webkit-text-stroke:.5px #e6e6e6">165</div>
<div class="code" style="left:105px;top:208px;-webkit-text-stroke:.4px #000">        <span class="id">cod</span><span class="op">[</span><span class="nu">0</span><span class="op">]</span> <span class="op">=</span> <span class="id">SEG_NUM</span><span class="op">[</span><span class="nu">1</span><span class="op">]</span><span class="op">;</span></div>
<div class="code" style="left:48px;top:231px;color:#000;-webkit-text-stroke:.5px #e6e6e6">166</div>
<div class="code" style="left:105px;top:231px;-webkit-text-stroke:.4px #000">        <span class="id">cod</span><span class="op">[</span><span class="nu">1</span><span class="op">]</span> <span class="op">=</span> <span class="id">SEG_NUM</span><span class="op">[</span><span class="nu">0</span><span class="op">]</span><span class="op">|</span><span class="id">SEG_NUM</span><span class="op">[</span><span class="nu">18</span><span class="op">]</span><span class="op">;</span></div>
<div class="code" style="left:48px;top:254px;color:#000;-webkit-text-stroke:.5px #e6e6e6">167</div>
<div class="code" style="left:105px;top:254px;-webkit-text-stroke:.4px #000">        <span class="id">cod</span><span class="op">[</span><span class="nu">2</span><span class="op">]</span> <span class="op">=</span> <span class="id">SEG_NUM</span><span class="op">[</span><span class="nu">0</span><span class="op">]</span><span class="op">;</span></div>
<div class="code" style="left:48px;top:277px;color:#000;-webkit-text-stroke:.5px #e6e6e6">168</div>
<div class="code" style="left:105px;top:277px;-webkit-text-stroke:.4px #000">        <span class="id">cod</span><span class="op">[</span><span class="nu">3</span><span class="op">]</span> <span class="op">=</span> <span class="id">SEG_NUM</span><span class="op">[</span><span class="nu">0</span><span class="op">]</span><span class="op">;</span></div>
<div class="code" style="left:48px;top:300px;color:#000;-webkit-text-stroke:.5px #e6e6e6">169</div>
<div class="code" style="left:48px;top:323px;color:#000;-webkit-text-stroke:.5px #e6e6e6">170</div>
<div class="code" style="left:105px;top:323px;-webkit-text-stroke:.4px #000">        <span class="id">cod</span><span class="op">[</span><span class="nu">4</span><span class="op">]</span> <span class="op">=</span> <span class="id">SEG_NUM</span><span class="op">[</span><span class="id">cnt</span><span class="op">[</span><span class="nu">1</span><span class="op">]</span><span class="op">/</span><span class="nu">10</span><span class="op">]</span><span class="op">;</span></div>
<div class="code" style="left:48px;top:346px;color:#000;-webkit-text-stroke:.5px #e6e6e6">171</div>
<div class="code" style="left:105px;top:346px;-webkit-text-stroke:.4px #000">        <span class="id">cod</span><span class="op">[</span><span class="nu">5</span><span class="op">]</span> <span class="op">=</span> <span class="id">SEG_NUM</span><span class="op">[</span><span class="id">cnt</span><span class="op">[</span><span class="nu">1</span><span class="op">]</span><span class="op">%</span><span class="nu">10</span><span class="op">]</span><span class="op">|</span><span class="id">SEG_NUM</span><span class="op">[</span><span class="nu">18</span><span class="op">]</span><span class="op">;</span></div>
<div class="code" style="left:48px;top:369px;color:#000;-webkit-text-stroke:.5px #e6e6e6">172</div>
<div class="code" style="left:105px;top:369px;-webkit-text-stroke:.4px #000">        <span class="id">cod</span><span class="op">[</span><span class="nu">6</span><span class="op">]</span> <span class="op">=</span> <span class="id">SEG_NUM</span><span class="op">[</span><span class="id">cnt</span><span class="op">[</span><span class="nu">0</span><span class="op">]</span><span class="op">/</span><span class="nu">10</span><span class="op">]</span><span class="op">;</span></div>
<div class="code" style="left:48px;top:392px;color:#000;-webkit-text-stroke:.5px #e6e6e6">173</div>
<div class="code" style="left:105px;top:392px;-webkit-text-stroke:.4px #000">        <span class="id">cod</span><span class="op">[</span><span class="nu">7</span><span class="op">]</span> <span class="op">=</span> <span class="id">SEG_NUM</span><span class="op">[</span><span class="id">cnt</span><span class="op">[</span><span class="nu">0</span><span class="op">]</span><span class="op">%</span><span class="nu">10</span><span class="op">]</span><span class="op">;</span></div>
<div class="code" style="left:48px;top:415px;color:#000;-webkit-text-stroke:.5px #e6e6e6">174</div>
<div class="code" style="left:105px;top:415px;-webkit-text-stroke:.4px #000">    <span class="op">}</span></div>
<div class="code" style="left:48px;top:438px;color:#000;-webkit-text-stroke:.5px #e6e6e6">175</div>
<div class="code" style="left:105px;top:438px;-webkit-text-stroke:.4px #000">    <span class="kw">else</span></div>
<div class="code" style="left:48px;top:461px;color:#000;-webkit-text-stroke:.5px #e6e6e6">176</div>
<div class="code" style="left:105px;top:461px;-webkit-text-stroke:.4px #000">    <span class="op">{</span></div>
<div class="code" style="left:48px;top:484px;color:#000;-webkit-text-stroke:.5px #e6e6e6">177</div>
<div class="code" style="left:105px;top:484px;-webkit-text-stroke:.4px #000">        <span class="id">cod</span><span class="op">[</span><span class="nu">0</span><span class="op">]</span> <span class="op">=</span> <span class="id">SEG_NUM</span><span class="op">[</span><span class="nu">1</span><span class="op">]</span><span class="op">;</span></div>
<div class="code" style="left:48px;top:507px;color:#000;-webkit-text-stroke:.5px #e6e6e6">178</div>
<div class="code" style="left:105px;top:507px;-webkit-text-stroke:.4px #000">        <span class="id">cod</span><span class="op">[</span><span class="nu">1</span><span class="op">]</span> <span class="op">=</span> <span class="id">SEG_NUM</span><span class="op">[</span><span class="nu">0</span><span class="op">]</span><span class="op">|</span><span class="id">SEG_NUM</span><span class="op">[</span><span class="nu">18</span><span class="op">]</span><span class="op">;</span></div>
<div class="code" style="left:48px;top:530px;color:#000;-webkit-text-stroke:.5px #e6e6e6">179</div>
<div class="code" style="left:105px;top:530px;-webkit-text-stroke:.4px #000">        <span class="id">cod</span><span class="op">[</span><span class="nu">2</span><span class="op">]</span> <span class="op">=</span> <span class="id">SEG_NUM</span><span class="op">[</span><span class="nu">0</span><span class="op">]</span><span class="op">;</span></div>
<div class="code" style="left:48px;top:553px;color:#000;-webkit-text-stroke:.5px #e6e6e6">180</div>
<div class="code" style="left:105px;top:553px;-webkit-text-stroke:.4px #000">        <span class="id">cod</span><span class="op">[</span><span class="nu">3</span><span class="op">]</span> <span class="op">=</span> <span class="id">SEG_NUM</span><span class="op">[</span><span class="nu">0</span><span class="op">]</span><span class="op">;</span></div>
<div class="code" style="left:48px;top:576px;color:#000;-webkit-text-stroke:.5px #e6e6e6">181</div>
<div class="code" style="left:48px;top:599px;color:#000;-webkit-text-stroke:.5px #e6e6e6">182</div>
<div class="code" style="left:105px;top:599px;-webkit-text-stroke:.4px #000">        <span class="id">cod</span><span class="op">[</span><span class="nu">4</span><span class="op">]</span> <span class="op">=</span> <span class="id">SEG_NUM</span><span class="op">[</span><span class="id">cnt</span><span class="op">[</span><span class="nu">1</span><span class="op">]</span><span class="op">/</span><span class="nu">10</span><span class="op">]</span><span class="op">;</span></div>
<div class="code" style="left:48px;top:622px;color:#000;-webkit-text-stroke:.5px #e6e6e6">183</div>
<div class="code" style="left:105px;top:622px;-webkit-text-stroke:.4px #000">        <span class="id">cod</span><span class="op">[</span><span class="nu">5</span><span class="op">]</span> <span class="op">=</span> <span class="id">SEG_NUM</span><span class="op">[</span><span class="id">cnt</span><span class="op">[</span><span class="nu">1</span><span class="op">]</span><span class="op">%</span><span class="nu">10</span><span class="op">]</span><span class="op">|</span><span class="id">SEG_NUM</span><span class="op">[</span><span class="nu">18</span><span class="op">]</span><span class="op">;</span></div>
<div class="code" style="left:48px;top:645px;color:#000;-webkit-text-stroke:.5px #e6e6e6">184</div>
<div class="code" style="left:105px;top:645px;-webkit-text-stroke:.4px #000">        <span class="id">cod</span><span class="op">[</span><span class="nu">6</span><span class="op">]</span> <span class="op">=</span> <span class="id">SEG_NUM</span><span class="op">[</span><span class="id">cnt</span><span class="op">[</span><span class="nu">0</span><span class="op">]</span><span class="op">/</span><span class="nu">10</span><span class="op">]</span><span class="op">;</span></div>
<div class="code" style="left:48px;top:668px;color:#000;-webkit-text-stroke:.5px #e6e6e6">185</div>
<div class="code" style="left:105px;top:668px;-webkit-text-stroke:.4px #000">        <span class="id">cod</span><span class="op">[</span><span class="nu">7</span><span class="op">]</span> <span class="op">=</span> <span class="id">SEG_NUM</span><span class="op">[</span><span class="id">cnt</span><span class="op">[</span><span class="nu">0</span><span class="op">]</span><span class="op">%</span><span class="nu">10</span><span class="op">]</span><span class="op">;</span></div>
<div class="code" style="left:48px;top:691px;color:#000;-webkit-text-stroke:.5px #e6e6e6">186</div>
<div class="code" style="left:105px;top:691px;-webkit-text-stroke:.4px #000">    <span class="op">}</span></div>
<div class="code" style="left:48px;top:714px;color:#000;-webkit-text-stroke:.5px #e6e6e6">187</div>
<div class="code" style="left:105px;top:714px;-webkit-text-stroke:.4px #000">    <span class="id">SEG7_ShowCode</span><span class="op">(</span><span class="id">cod</span><span class="op">)</span><span class="op">;</span></div>
</div>
<div class="a " style="left:345px;top:129px;width:1px;height:34px;background:#808080"></div>
<div class="a " style="left:345px;top:162px;width:5px;height:1px;background:#808080"></div>
<div class="a " style="left:345px;top:236px;width:1px;height:616px;background:#808080"></div>
<svg class="a" style="left:340.5px;top:228px" width="9" height="9" viewBox="0 0 9 9"><rect x=".5" y=".5" width="8" height="8" fill="#fff" stroke="#808080"/><path d="M2 4.500h5" stroke="#000"/></svg>
<svg class="a" style="left:340.5px;top:320px" width="9" height="9" viewBox="0 0 9 9"><rect x=".5" y=".5" width="8" height="8" fill="#fff" stroke="#808080"/><path d="M2 4.500h5" stroke="#000"/></svg>
<svg class="a" style="left:340.5px;top:596px" width="9" height="9" viewBox="0 0 9 9"><rect x=".5" y=".5" width="8" height="8" fill="#fff" stroke="#808080"/><path d="M2 4.500h5" stroke="#000"/></svg>
<div class="a " style="left:345px;top:554px;width:5px;height:1px;background:#808080"></div>
<div class="a " style="left:345px;top:830px;width:5px;height:1px;background:#808080"></div>
<div class="a" style="left:1039px;top:156px;width:881px;height:658px;background:#f0f0f0;overflow:hidden">
<div class="a" style="left:-1039px;top:-156px;width:1920px;height:1080px">
<div class="a " style="left:1039px;top:156px;width:881px;height:48.5px;background:#fff"></div>
<svg class="a" style="left:1047px;top:162px" width="16" height="16" viewBox="0 0 16 16"><g fill="none" stroke-width="1.400"><path d="M1 2.500h6.500c4 0 6 2.500 6 6v6" stroke="#e8306a"/><path d="M1 5.500h6c2.500 0 4 1.500 4 4v5" stroke="#e8306a"/><path d="M1 8.500h5c1.500 0 2.500 1 2.500 2.500v3.500" stroke="#e8306a"/><path d="M1 14.500v-1.500c0-1 .8-1.800 2-1.800h11.500" stroke="#1818d8"/><path d="M3.500 14.500h11" stroke="#1818d8"/></g></svg>
<div class="t y" style="left:1068px;top:163.5px;">单片机在线升级编程仿真调试平台软件 (V6.96J), 远程现场升级APP发布</div>
<svg class="a" style="left:1850px;top:160px" width="70" height="20" viewBox="0 0 70 20"><path d="M5 10.500h10" stroke="#000"/><rect x="50.500" y="5.500" width="9" height="9" fill="none" stroke="#000"/></svg>
<div class="t y" style="left:1045.5px;top:187.5px;">文件(<u>F</u>)</div>
<div class="t y" style="left:1098px;top:187.5px;">编程(<u>O</u>)</div>
<div class="t y" style="left:1154px;top:187.5px;">工具(<u>T</u>)</div>
<div class="t y" style="left:1207px;top:187.5px;">调试仿真接口(<u>G</u>)</div>
<div class="t y" style="left:1310px;top:187.5px;">资料下载(<u>D</u>)</div>
<div class="t y" style="left:1389.5px;top:187.5px;">常用工具(<u>S</u>)</div>
<div class="t y" style="left:1466px;top:187.5px;">USB驱动安装(<u>U</u>)</div>
<div class="t y" style="left:1568.5px;top:187.5px;">AiCube(<u>A</u>)</div>
<div class="t y" style="left:1640px;top:187.5px;"><u>E</u>nglish</div>
<div class="t y" style="left:1695px;top:187.5px;">www.STCAI.com 论坛交流</div>
<div class="btn s " style="left:1050px;top:216px;width:58px;height:20px;line-height:18px;border:2px solid #0078d7;line-height:16px">芯片型号</div>
<div class="a " style="left:1052px;top:218px;width:54px;height:16px;border:1px dotted #000"></div>
<div class="cmb s " style="left:1111px;top:216px;width:158px;height:20px;line-height:18px;padding-left:3px;"><i>AI8051U-34K64</i><svg width="9" height="6" viewBox="0 0 9 6"><path d="M.6 .7L4.500 4.600l3.900-3.900" fill="none" stroke="#3c3c3c" stroke-width="1.100"/></svg></div>
<div class="t s " style="left:1273px;top:218px;">引脚数</div>
<div class="cmb s " style="left:1311px;top:216px;width:48px;height:20px;line-height:18px;padding-left:3px;"><i>Auto</i><svg width="9" height="6" viewBox="0 0 9 6"><path d="M.6 .7L4.500 4.600l3.900-3.900" fill="none" stroke="#3c3c3c" stroke-width="1.100"/></svg></div>
<div class="btn s " style="left:1050px;top:241px;width:58px;height:20px;line-height:18px;">扫描串口</div>
<div class="cmb s " style="left:1111px;top:241px;width:200px;height:20px;line-height:18px;padding-left:3px;"><i>(COM5) USB-CDC,CDC</i><svg width="9" height="6" viewBox="0 0 9 6"><path d="M.6 .7L4.500 4.600l3.900-3.900" fill="none" stroke="#3c3c3c" stroke-width="1.100"/></svg></div>
<div class="btn s " style="left:1314px;top:241px;width:44px;height:20px;line-height:18px;">设置</div>
<div class="t s " style="left:1049px;top:268px;">最低波特率</div>
<div class="cmb s " style="left:1111px;top:266px;width:80px;height:20px;line-height:18px;padding-left:3px;"><i>2400</i><svg width="9" height="6" viewBox="0 0 9 6"><path d="M.6 .7L4.500 4.600l3.900-3.900" fill="none" stroke="#3c3c3c" stroke-width="1.100"/></svg></div>
<div class="t s " style="left:1214px;top:268px;">最高波特率</div>
<div class="cmb s " style="left:1279px;top:266px;width:80px;height:20px;line-height:18px;padding-left:3px;"><i>115200</i><svg width="9" height="6" viewBox="0 0 9 6"><path d="M.6 .7L4.500 4.600l3.900-3.900" fill="none" stroke="#3c3c3c" stroke-width="1.100"/></svg></div>
<div class="t s " style="left:1049px;top:293px;">起始地址</div>
<div class="ed s" style="left:1049px;top:308px;width:59px;height:16px;line-height:14px;border:1px solid #a0a0a0;border-right-color:#fff;border-bottom-color:#fff;"><i>0x0000</i></div>
<div class="cb" style="left:1111px;top:310px"><svg width="11" height="11" viewBox="0 0 11 11"><path d="M1.500 5.500l3 3 5.500-6.500" fill="none" stroke="#3c3c3c" stroke-width="1.200"/></svg></div>
<div class="t s " style="left:1127px;top:309px;">清除代码缓冲区</div>
<div class="btn s " style="left:1255px;top:303px;width:103px;height:22px;line-height:20px;">打开程序文件</div>
<div class="ed s" style="left:1049px;top:330px;width:59px;height:16px;line-height:14px;border:1px solid #a0a0a0;border-right-color:#fff;border-bottom-color:#fff;"><i>0x0000</i></div>
<div class="cb" style="left:1111px;top:332px"><svg width="11" height="11" viewBox="0 0 11 11"><path d="M1.500 5.500l3 3 5.500-6.500" fill="none" stroke="#3c3c3c" stroke-width="1.200"/></svg></div>
<div class="t s " style="left:1127px;top:331px;">清除<i>EEPROM</i>缓冲区</div>
<div class="btn s " style="left:1255px;top:329px;width:103px;height:22px;line-height:20px;">打开<i>EEPROM</i>文件</div>
<div class="a " style="left:1113px;top:354.5px;width:148px;height:19px;background:#f0f0f0;border:1px solid #d9d9d9"></div>
<div class="a " style="left:1260px;top:354.5px;width:98px;height:19px;background:#f0f0f0;border:1px solid #d9d9d9"></div>
<div class="a " style="left:1049px;top:372.5px;width:308.5px;height:331px;background:#fff;border:1px solid #d9d9d9"></div>
<div class="a " style="left:1049px;top:352.5px;width:64px;height:21px;background:#fff;border:1px solid #d9d9d9;border-bottom:none"></div>
<div class="t s " style="left:1057px;top:354px;">硬件选项</div>
<div class="t s " style="left:1117px;top:356px;"><i>Link1D/Writer1A/U8W</i>脱机</div>
<div class="t s " style="left:1267px;top:356px;">程序加密后</div>
<div class="a " style="left:1326px;top:355px;width:16px;height:16px;background:#f0f0f0;border:1px solid #adadad"></div>
<div class="a " style="left:1342px;top:355px;width:16px;height:16px;background:#f0f0f0;border:1px solid #adadad"></div>
<svg class="a" style="left:1331.5px;top:359.5px" width="4" height="7" viewBox="0 0 4 7"><path d="M4 0v7L0 3.500z" fill="#000"/></svg>
<svg class="a" style="left:1348.5px;top:359.5px" width="4" height="7" viewBox="0 0 4 7"><path d="M0 0v7l4-3.500z" fill="#000"/></svg>
<div class="a " style="left:1058px;top:380px;width:292px;height:315.5px;background:#f0f0f0;border:1px solid #696969"></div>
<div class="a " style="left:1330px;top:381px;width:17px;height:313.5px;background:#f0f0f0"></div>
<div class="a " style="left:1331px;top:398px;width:15px;height:145px;background:#cdcdcd"></div>
<svg class="a" style="left:1334px;top:388.5px" width="9" height="6" viewBox="0 0 9 6"><path d="M1 5l3.500-3.500L8 5" fill="none" stroke="#606060" stroke-width="1.600"/></svg>
<svg class="a" style="left:1334px;top:682px" width="9" height="6" viewBox="0 0 9 6"><path d="M1 1l3.500 3.500L8 1" fill="none" stroke="#606060" stroke-width="1.600"/></svg>
<div class="cb" style="left:1061px;top:385px"><svg width="11" height="11" viewBox="0 0 11 11"><path d="M1.500 5.500l3 3 5.500-6.500" fill="none" stroke="#3c3c3c" stroke-width="1.200"/></svg></div>
<div class="t s " style="left:1079px;top:384px;">本次下载需要修改硬件选项</div>
<div class="t s " style="left:1079px;top:405px;">选择<i>CPU</i>指令模式</div>
<div class="cmb s " style="left:1171px;top:401px;width:100px;height:20px;line-height:18px;padding-left:3px;"><i>32-Bit</i><svg width="9" height="6" viewBox="0 0 9 6"><path d="M.6 .7L4.500 4.600l3.900-3.900" fill="none" stroke="#3c3c3c" stroke-width="1.100"/></svg></div>
<div class="t s " style="left:1079px;top:430px;"><i>IRC</i>调节模式</div>
<div class="cmb s " style="left:1151px;top:426px;width:175px;height:20px;line-height:18px;padding-left:3px;">总是动态调节<i>IRC</i>频率<svg width="9" height="6" viewBox="0 0 9 6"><path d="M.6 .7L4.500 4.600l3.900-3.900" fill="none" stroke="#3c3c3c" stroke-width="1.100"/></svg></div>
<div class="t s " style="left:1065px;top:455px;">输入用户程序运行时的<i>IRC</i>频率</div>
<div class="cmb s w" style="left:1230px;top:451px;width:69px;height:20px;line-height:18px;padding-left:3px;"><i>24.000</i><svg width="9" height="6" viewBox="0 0 9 6"><path d="M.6 .7L4.500 4.600l3.900-3.900" fill="none" stroke="#3c3c3c" stroke-width="1.100"/></svg></div>
<div class="t s " style="left:1300px;top:455px;"><i>MHz</i></div>
<div class="cb" style="left:1061px;top:479px"><svg width="11" height="11" viewBox="0 0 11 11"><path d="M1.500 5.500l3 3 5.500-6.500" fill="none" stroke="#3c3c3c" stroke-width="1.200"/></svg></div>
<div class="t s " style="left:1079px;top:478px;">振荡器放大增益<i>(12M</i>以上建议选择<i>)</i></div>
<div class="cb" style="left:1061px;top:499px"></div>
<div class="t s " style="left:1079px;top:498px;">使能用户系统区功能</div>
<div class="t s " style="left:1079px;top:520px;">设置用户系统区大小</div>
<div class="cmb s dis" style="left:1201px;top:516px;width:80px;height:20px;line-height:18px;padding-left:3px;"><i>0.5 K</i><svg width="9" height="6" viewBox="0 0 9 6"><path d="M.6 .7L4.500 4.600l3.900-3.900" fill="none" stroke="#9a9a9a" stroke-width="1.100"/></svg></div>
<div class="t s " style="left:1079px;top:545px;">设置用户<i>EEPROM</i>大小</div>
<div class="cmb s " style="left:1201px;top:541px;width:80px;height:20px;line-height:18px;padding-left:3px;"><i>1   K</i><svg width="9" height="6" viewBox="0 0 9 6"><path d="M.6 .7L4.500 4.600l3.900-3.900" fill="none" stroke="#3c3c3c" stroke-width="1.100"/></svg></div>
<div class="cb" style="left:1061px;top:569px"><svg width="11" height="11" viewBox="0 0 11 11"><path d="M1.500 5.500l3 3 5.500-6.500" fill="none" stroke="#3c3c3c" stroke-width="1.200"/></svg></div>
<div class="t s " style="left:1079px;top:568px;">上电复位使用较长延时</div>
<div class="cb" style="left:1061px;top:589px"><svg width="11" height="11" viewBox="0 0 11 11"><path d="M1.500 5.500l3 3 5.500-6.500" fill="none" stroke="#3c3c3c" stroke-width="1.200"/></svg></div>
<div class="t s " style="left:1079px;top:588px;">复位脚用作<i>I/O</i>口</div>
<div class="cb" style="left:1061px;top:609px"><svg width="11" height="11" viewBox="0 0 11 11"><path d="M1.500 5.500l3 3 5.500-6.500" fill="none" stroke="#3c3c3c" stroke-width="1.200"/></svg></div>
<div class="t s " style="left:1079px;top:608px;">允许低压复位<i>(</i>禁止低压中断<i>)</i></div>
<div class="t s " style="left:1079px;top:630px;">低压检测电压</div>
<div class="cmb s " style="left:1171px;top:626px;width:100px;height:20px;line-height:18px;padding-left:3px;"><i>2.00 V</i><svg width="9" height="6" viewBox="0 0 9 6"><path d="M.6 .7L4.500 4.600l3.900-3.900" fill="none" stroke="#3c3c3c" stroke-width="1.100"/></svg></div>
<div class="cb" style="left:1061px;top:654px"></div>
<div class="t s " style="left:1079px;top:653px;">上电复位时由硬件自动启动看门狗</div>
<div class="cb" style="left:1061px;top:674px"><svg width="11" height="11" viewBox="0 0 11 11"><path d="M1.500 5.500l3 3 5.500-6.500" fill="none" stroke="#3c3c3c" stroke-width="1.200"/></svg></div>
<div class="t s " style="left:1079px;top:673px;">空闲状态时停止看门狗计数</div>
<div class="btn s " style="left:1050px;top:710px;width:108px;height:23px;line-height:21px;">下载<i>/</i>编程</div>
<div class="btn s dis" style="left:1165px;top:710px;width:68px;height:23px;line-height:21px;">停止</div>
<div class="btn s " style="left:1240px;top:710px;width:108px;height:21px;line-height:19px;">重复编程</div>
<div class="btn s " style="left:1050px;top:740px;width:108px;height:23px;line-height:21px;">检测选项</div>
<div class="btn s " style="left:1165px;top:740px;width:68px;height:23px;line-height:21px;">帮助</div>
<div class="t s " style="left:1249px;top:741px;">重复延时</div>
<div class="cmb s w" style="left:1299px;top:739px;width:55px;height:20px;line-height:18px;padding-left:3px;"><svg width="9" height="6" viewBox="0 0 9 6"><path d="M.6 .7L4.500 4.600l3.900-3.900" fill="none" stroke="#3c3c3c" stroke-width="1.100"/></svg></div>
<div class="a " style="left:1301.5px;top:741.5px;width:26px;height:14.5px;background:#0078d7"></div>
<div class="t s " style="left:1303px;top:741px;color:#fff"><i>3 </i>秒</div>
<div class="t s " style="left:1249px;top:766px;">重复次数</div>
<div class="cmb s " style="left:1299px;top:764px;width:55px;height:20px;line-height:18px;padding-left:3px;">无限<svg width="9" height="6" viewBox="0 0 9 6"><path d="M.6 .7L4.500 4.600l3.900-3.900" fill="none" stroke="#3c3c3c" stroke-width="1.100"/></svg></div>
<div class="cb" style="left:1049px;top:772px"><svg width="11" height="11" viewBox="0 0 11 11"><path d="M1.500 5.500l3 3 5.500-6.500" fill="none" stroke="#3c3c3c" stroke-width="1.200"/></svg></div>
<div class="t s " style="left:1065px;top:771px;">每次下载前都重新装载目标文件</div>
<div class="cb" style="left:1049px;top:792px"></div>
<div class="t s " style="left:1065px;top:791px;">当目标文件变化时自动装载并发送下载命令</div>
<div class="a " style="left:1366px;top:218.5px;width:60.5px;height:19px;background:#f0f0f0;border:1px solid #d9d9d9"></div>
<div class="t s " style="left:1372px;top:220px;">程序文件</div>
<div class="a " style="left:1425.5px;top:218.5px;width:72px;height:19px;background:#f0f0f0;border:1px solid #d9d9d9"></div>
<div class="t s " style="left:1432px;top:220px;"><i>EEPROM</i>文件</div>
<div class="a " style="left:1607.5px;top:218.5px;width:77px;height:19px;background:#f0f0f0;border:1px solid #d9d9d9"></div>
<div class="t s " style="left:1614px;top:220px;"><i>USB-HID</i>助手</div>
<div class="a " style="left:1683.5px;top:218.5px;width:55px;height:19px;background:#f0f0f0;border:1px solid #d9d9d9"></div>
<div class="t s " style="left:1690px;top:220px;"><i>CAN</i>助手</div>
<div class="a " style="left:1737.5px;top:218.5px;width:84.5px;height:19px;background:#f0f0f0;border:1px solid #d9d9d9"></div>
<div class="t s " style="left:1744px;top:220px;"><i>Keil</i>仿真设置</div>
<div class="a " style="left:1821px;top:218.5px;width:61px;height:19px;background:#f0f0f0;border:1px solid #d9d9d9"></div>
<div class="t s " style="left:1827px;top:220px;">范例程序</div>
<div class="a " style="left:1881px;top:218.5px;width:80px;height:19px;background:#f0f0f0;border:1px solid #d9d9d9"></div>
<div class="t s " style="left:1887px;top:220px;"><i>I/O</i>口配置</div>
<div class="a " style="left:1364.5px;top:236.5px;width:600px;height:324.5px;background:#fff;border:1px solid #d9d9d9"></div>
<div class="a " style="left:1496.5px;top:216px;width:111.5px;height:22px;background:#fff;border:1px solid #d9d9d9;border-bottom:none"></div>
<div class="t s " style="left:1503px;top:218px;"><i>CDC/HID-</i>串口助手</div>
<div class="a " style="left:1373px;top:244px;width:600px;height:308.5px;background:#f0f0f0;border:1px solid #696969;box-shadow:-1px -1px 0 #a0a0a0"></div>
<div class="a " style="left:1379px;top:253.5px;width:437px;height:118.5px;border:1px solid #dcdcdc;box-shadow:1px 1px 0 #fff, inset 1px 1px 0 #fff"></div>
<div class="a " style="left:1386px;top:246.5px;width:64px;height:14px;background:#f0f0f0"></div>
<div class="t s " style="left:1388px;top:245px;">接收缓冲区</div>
<div class="cb" style="left:1387px;top:264px"><svg width="11" height="11" viewBox="0 0 11 11"><path d="M1.500 5.500l3 3 5.500-6.500" fill="none" stroke="#3c3c3c" stroke-width="1.200"/></svg></div>
<div class="t s " style="left:1403px;top:263px;">文本模式</div>
<div class="cb" style="left:1387px;top:280px"></div>
<div class="t s " style="left:1403px;top:279px;"><i>HEX</i>模式</div>
<div class="btn s " style="left:1388px;top:296px;width:78px;height:18px;line-height:16px;">清空接收区</div>
<div class="btn s " style="left:1388px;top:318px;width:78px;height:18px;line-height:16px;">保存接收数据</div>
<div class="btn s " style="left:1388px;top:340px;width:78px;height:18px;line-height:16px;">复制接收数据</div>
<div class="a " style="left:1472px;top:263px;width:337px;height:101px;background:#fff;border:1px solid #a0a0a0;border-right-color:#e3e3e3;border-bottom-color:#e3e3e3"></div>
<div class="t s" style="left:1474.5px;top:264px;color:#0000ff;width:332px;overflow:hidden"><i>7SEGC....???</i>哋<i>£7SEGC....???</i>哋<i>£7SEGC....???</i>哋<i>£7SEGC....???</i>哋<i>£</i></div>
<div class="a " style="left:1473px;top:347.5px;width:335px;height:16px;background:#f0f0f0"></div>
<div class="a " style="left:1490px;top:347.5px;width:17px;height:16px;background:#cdcdcd"></div>
<svg class="a" style="left:1478.5px;top:351px" width="6" height="9" viewBox="0 0 6 9"><path d="M5 1L1.500 4.500 5 8" fill="none" stroke="#606060" stroke-width="1.600"/></svg>
<svg class="a" style="left:1796.5px;top:351px" width="6" height="9" viewBox="0 0 6 9"><path d="M1 1l3.500 3.500L1 8" fill="none" stroke="#606060" stroke-width="1.600"/></svg>
<div class="a " style="left:1376px;top:376px;width:440px;height:1px;background:#a8d8f0"></div>
<div class="a " style="left:1818px;top:247px;width:1px;height:302px;background:#a8d8f0"></div>
<div class="a " style="left:1379px;top:384.5px;width:437px;height:97px;border:1px solid #dcdcdc;box-shadow:1px 1px 0 #fff, inset 1px 1px 0 #fff"></div>
<div class="a " style="left:1386px;top:377.5px;width:64px;height:14px;background:#f0f0f0"></div>
<div class="t s " style="left:1388px;top:376px;">发送缓冲区</div>
<div class="rd" style="left:1387px;top:393px"><div class="a" style="left:2px;top:2px;width:7px;height:7px;border-radius:50%;background:#222"></div></div>
<div class="t s " style="left:1403px;top:392px;">文本模式</div>
<div class="rd" style="left:1387px;top:409px"></div>
<div class="t s " style="left:1403px;top:408px;"><i>HEX</i>模式</div>
<div class="btn s " style="left:1388px;top:425px;width:78px;height:18px;line-height:16px;">清空发送区</div>
<div class="a " style="left:1472px;top:392.5px;width:337px;height:64px;background:#fff;border:1px solid #a0a0a0;border-right-color:#e3e3e3;border-bottom-color:#e3e3e3"></div>
<div class="btn s " style="left:1388px;top:460px;width:54px;height:18px;line-height:16px;">发送文件</div>
<div class="btn s " style="left:1446px;top:460px;width:54px;height:18px;line-height:16px;">发送回车</div>
<div class="btn s " style="left:1504px;top:460px;width:54px;height:18px;line-height:16px;">发送数据</div>
<div class="btn s " style="left:1562px;top:460px;width:54px;height:18px;line-height:16px;">自动发送</div>
<div class="t s " style="left:1627px;top:461px;">周期<i>(ms)</i></div>
<div class="ed s" style="left:1678px;top:461px;width:27px;height:16px;line-height:14px;border:1px solid #7a7a7a;text-align:center"><i>100</i></div>
<div class="cb" style="left:1707px;top:462px"></div>
<div class="t s " style="left:1723px;top:461px;">收发匹配测试</div>
<div class="t s " style="left:1386px;top:492px;">串口</div>
<div class="cmb s dis" style="left:1412px;top:490px;width:60px;height:20px;line-height:18px;padding-left:3px;"><i>COM5</i><svg width="9" height="6" viewBox="0 0 9 6"><path d="M.6 .7L4.500 4.600l3.900-3.900" fill="none" stroke="#9a9a9a" stroke-width="1.100"/></svg></div>
<div class="t s " style="left:1489px;top:492px;">波特率</div>
<div class="cmb s w" style="left:1528px;top:490px;width:69px;height:20px;line-height:18px;padding-left:3px;"><i>115200</i><svg width="9" height="6" viewBox="0 0 9 6"><path d="M.6 .7L4.500 4.600l3.900-3.900" fill="none" stroke="#3c3c3c" stroke-width="1.100"/></svg></div>
<div class="t s " style="left:1604px;top:492px;">校验位</div>
<div class="cmb s " style="left:1643px;top:490px;width:64px;height:20px;line-height:18px;padding-left:3px;">无校验<svg width="9" height="6" viewBox="0 0 9 6"><path d="M.6 .7L4.500 4.600l3.900-3.900" fill="none" stroke="#3c3c3c" stroke-width="1.100"/></svg></div>
<div class="t s " style="left:1714px;top:492px;">停止位</div>
<div class="cmb s " style="left:1752px;top:490px;width:60px;height:20px;line-height:18px;padding-left:3px;"><i>1</i>位<svg width="9" height="6" viewBox="0 0 9 6"><path d="M.6 .7L4.500 4.600l3.900-3.900" fill="none" stroke="#3c3c3c" stroke-width="1.100"/></svg></div>
<div class="btn s " style="left:1380px;top:517px;width:63px;height:28px;line-height:26px;">关闭串口</div>
<div class="cb" style="left:1449px;top:517px"><svg width="11" height="11" viewBox="0 0 11 11"><path d="M1.500 5.500l3 3 5.500-6.500" fill="none" stroke="#3c3c3c" stroke-width="1.200"/></svg></div>
<div class="t s " style="left:1465px;top:516px;">编程完自动打开</div>
<div class="cb" style="left:1449px;top:533px"></div>
<div class="t s " style="left:1465px;top:532px;">自动发送结束符</div>
<div class="btn s " style="left:1556px;top:517px;width:62px;height:28px;line-height:26px;">更多设置</div>
<div class="t s " style="left:1625px;top:515px;">发送</div>
<div class="ed s" style="left:1651px;top:514px;width:120px;height:16px;line-height:14px;border:1px solid #7a7a7a;background:#f0f0f0;text-align:right;padding-right:4px"><i>0</i></div>
<div class="t s " style="left:1625px;top:532px;">接收</div>
<div class="ed s" style="left:1651px;top:532px;width:120px;height:16px;line-height:14px;border:1px solid #7a7a7a;background:#f0f0f0;text-align:right;padding-right:4px"><i>1781780</i></div>
<div class="btn s " style="left:1775px;top:531px;width:37px;height:18px;line-height:16px;">清零</div>
<div class="a " style="left:1821.5px;top:253.5px;width:138.5px;height:294px;border:1px solid #dcdcdc;box-shadow:1px 1px 0 #fff, inset 1px 1px 0 #fff"></div>
<div class="a " style="left:1827.5px;top:246.5px;width:76px;height:14px;background:#f0f0f0"></div>
<div class="t s " style="left:1830px;top:245px;">多字符串发送</div>
<div class="cb" style="left:1826px;top:261px"><svg width="11" height="11" viewBox="0 0 11 11"><path d="M1.500 5.500l3 3 5.500-6.500" fill="none" stroke="#3c3c3c" stroke-width="1.200"/></svg></div>
<div class="t s " style="left:1843px;top:260px;">发送</div>
<div class="cb" style="left:1826px;top:278px"><svg width="11" height="11" viewBox="0 0 11 11"><path d="M1.500 5.500l3 3 5.500-6.500" fill="none" stroke="#3c3c3c" stroke-width="1.200"/></svg></div>
<div class="btn s " style="left:1843px;top:276px;width:19px;height:18px;line-height:16px;"><i>1</i></div>
<div class="ed s" style="left:1867px;top:276px;width:93px;height:18px;line-height:16px;border:1px solid #7a7a7a;"></div>
<div class="cb" style="left:1826px;top:298px"><svg width="11" height="11" viewBox="0 0 11 11"><path d="M1.500 5.500l3 3 5.500-6.500" fill="none" stroke="#3c3c3c" stroke-width="1.200"/></svg></div>
<div class="btn s " style="left:1843px;top:296px;width:19px;height:18px;line-height:16px;"><i>2</i></div>
<div class="ed s" style="left:1867px;top:296px;width:93px;height:18px;line-height:16px;border:1px solid #7a7a7a;"></div>
<div class="cb" style="left:1826px;top:318px"><svg width="11" height="11" viewBox="0 0 11 11"><path d="M1.500 5.500l3 3 5.500-6.500" fill="none" stroke="#3c3c3c" stroke-width="1.200"/></svg></div>
<div class="btn s " style="left:1843px;top:316px;width:19px;height:18px;line-height:16px;"><i>3</i></div>
<div class="ed s" style="left:1867px;top:316px;width:93px;height:18px;line-height:16px;border:1px solid #7a7a7a;"></div>
<div class="cb" style="left:1826px;top:338px"><svg width="11" height="11" viewBox="0 0 11 11"><path d="M1.500 5.500l3 3 5.500-6.500" fill="none" stroke="#3c3c3c" stroke-width="1.200"/></svg></div>
<div class="btn s " style="left:1843px;top:336px;width:19px;height:18px;line-height:16px;"><i>4</i></div>
<div class="ed s" style="left:1867px;top:336px;width:93px;height:18px;line-height:16px;border:1px solid #7a7a7a;"></div>
<div class="cb" style="left:1826px;top:358px"><svg width="11" height="11" viewBox="0 0 11 11"><path d="M1.500 5.500l3 3 5.500-6.500" fill="none" stroke="#3c3c3c" stroke-width="1.200"/></svg></div>
<div class="btn s " style="left:1843px;top:356px;width:19px;height:18px;line-height:16px;"><i>5</i></div>
<div class="ed s" style="left:1867px;top:356px;width:93px;height:18px;line-height:16px;border:1px solid #7a7a7a;"></div>
<div class="cb" style="left:1826px;top:378px"><svg width="11" height="11" viewBox="0 0 11 11"><path d="M1.500 5.500l3 3 5.500-6.500" fill="none" stroke="#3c3c3c" stroke-width="1.200"/></svg></div>
<div class="btn s " style="left:1843px;top:376px;width:19px;height:18px;line-height:16px;"><i>6</i></div>
<div class="ed s" style="left:1867px;top:376px;width:93px;height:18px;line-height:16px;border:1px solid #7a7a7a;"></div>
<div class="cb" style="left:1826px;top:398px"><svg width="11" height="11" viewBox="0 0 11 11"><path d="M1.500 5.500l3 3 5.500-6.500" fill="none" stroke="#3c3c3c" stroke-width="1.200"/></svg></div>
<div class="btn s " style="left:1843px;top:396px;width:19px;height:18px;line-height:16px;"><i>7</i></div>
<div class="ed s" style="left:1867px;top:396px;width:93px;height:18px;line-height:16px;border:1px solid #7a7a7a;"></div>
<div class="cb" style="left:1826px;top:418px"><svg width="11" height="11" viewBox="0 0 11 11"><path d="M1.500 5.500l3 3 5.500-6.500" fill="none" stroke="#3c3c3c" stroke-width="1.200"/></svg></div>
<div class="btn s " style="left:1843px;top:416px;width:19px;height:18px;line-height:16px;"><i>8</i></div>
<div class="ed s" style="left:1867px;top:416px;width:93px;height:18px;line-height:16px;border:1px solid #7a7a7a;"></div>
<div class="a " style="left:1864.5px;top:276px;width:1px;height:157px;background:#a8d8f0"></div>
<div class="cb" style="left:1826px;top:445px"></div>
<div class="t s " style="left:1842px;top:444px;">关闭提示</div>
<div class="btn s " style="left:1827px;top:465px;width:90px;height:18px;line-height:16px;">清空全部数据</div>
<div class="btn s " style="left:1827px;top:487px;width:90px;height:18px;line-height:16px;">自动循环发送</div>
<div class="t s " style="left:1828px;top:511px;">间隔时间</div>
<div class="ed s" style="left:1879px;top:512px;width:39px;height:15px;line-height:13px;border:1px solid #7a7a7a;text-align:right;padding-right:8px"><i>0</i></div>
<div class="t s " style="left:1828px;top:530px;">循环次数</div>
<div class="ed s" style="left:1879px;top:530px;width:39px;height:15px;line-height:13px;border:1px solid #7a7a7a;background:#f0f0f0;text-align:center"><i>0</i></div>
<div class="a " style="left:1364px;top:565.5px;width:560px;height:1px;background:#a8d8f0"></div>
<div class="a" style="left:1364.500px;top:570px;width:600px;height:182px;background:#fff;border:1px solid #a0a0a0;border-bottom-color:#fff;overflow:hidden">
<div class="t s" style="left:1px;top:-12px"><i>  . </i>下次下载用户程序时<i>,</i>将用户<i>EEPROM</i>区一并擦除</div>
<div class="t s" style="left:1px;top:4px"><i>  . </i>下次下载用户程序时<i>,</i>没有相关的端口控制<i>485</i></div>
<div class="t s" style="left:1px;top:20px"><i>  . </i>下次下载时不需要校验下载口令</div>
<div class="t s" style="left:1px;top:36px"><i>  . </i>内部参考电压<i>: 1189 mV (</i>参考范围<i>: 1100~1300mV)</i></div>
<div class="t s" style="left:1px;top:52px">芯片出厂序列号<i> : 78B4CA0F09718B</i></div>
<div class="t s" style="left:1px;top:84px"><i>  </i>单片机型号<i>: AI8051U-34K64</i></div>
<div class="t s" style="left:1px;top:116px">操作成功<i> !(2025-12-23 19:46:32)</i></div>
<div class="t s" style="left:1px;top:148px">等待<i>1</i>秒后自动打开串口助手<i> (#0) ...</i></div>
</div>
<div class="ed s" style="left:1365px;top:759px;width:595px;height:20px;line-height:18px;border:1px solid #a0a0a0;border-right-color:#fff;border-bottom-color:#fff;background:#f0f0f0;padding-left:0"><i>C:\Users\1\Desktop\AI8051u\</i>代码<i>\</i>第九集<i>\Objects\demo.hex</i></div>
<div class="btn s " style="left:1365px;top:785px;width:123px;height:23px;line-height:21px;">远程现场升级<i>APP</i>发布</div>
<div class="btn s " style="left:1493px;top:785px;width:73px;height:23px;line-height:21px;">发布<i>APP</i>帮助</div>
<div class="btn s " style="left:1571px;top:785px;width:93px;height:23px;line-height:21px;">读取本机硬盘号</div>
<div class="btn s " style="left:1669px;top:785px;width:33px;height:23px;line-height:21px;">清除</div>
<div class="btn s " style="left:1707px;top:785px;width:63px;height:23px;line-height:21px;">动态信息</div>
<div class="cb" style="left:1779px;top:790px"><svg width="11" height="11" viewBox="0 0 11 11"><path d="M1.500 5.500l3 3 5.500-6.500" fill="none" stroke="#3c3c3c" stroke-width="1.200"/></svg></div>
<div class="t s " style="left:1795px;top:789px;">提示音</div>
<div class="t s " style="left:1841px;top:789px;">成功计数</div>
<div class="ed s" style="left:1891px;top:786px;width:69px;height:20px;line-height:18px;border:1px solid #a0a0a0;border-right-color:#fff;border-bottom-color:#fff;background:#f0f0f0;padding-left:11px"><i>75</i></div>
</div></div>
<div class="a " style="left:0px;top:872px;width:1920px;height:5px;background:#fff"></div>
<div class="a " style="left:0px;top:877px;width:1920px;height:18px;background:linear-gradient(#c1cddc,#d6e3f0)"></div>
<div class="a " style="left:0px;top:895px;width:1920px;height:2px;background:#fff"></div>
<div class="t " style="left:4px;top:879px;letter-spacing:0.02px;">Build Output</div>
<svg class="a" style="left:1886px;top:881.5px" width="10" height="11" viewBox="0 0 10 11"><path d="M3 1.500h4M3.500 1.500v4M6.500 1.500v4M2 5.500h6M5 5.500v4" stroke="#000" stroke-width="1.200" fill="none"/></svg>
<div class="a " style="left:1904px;top:881px;width:12px;height:12px;background:#c9504e"></div>
<svg class="a" style="left:1906px;top:883px" width="8" height="8" viewBox="0 0 8 8"><path d="M1.500 1.500l5 5M6.500 1.500l-5 5" stroke="#fff" stroke-width="1.600"/></svg>
<div class="a " style="left:0px;top:897px;width:1920px;height:124px;background:#fff;border-top:2px solid #6e6e6e;border-left:2px solid #828282;border-bottom:1px solid #d0d0d0"></div>
<div class="a " style="left:2px;top:1003px;width:1917px;height:17px;background:#f0f0f0"></div>
<div class="a " style="left:1902px;top:899px;width:17px;height:104px;background:#f0f0f0"></div>
<svg class="a" style="left:7px;top:1006.5px" width="6" height="9" viewBox="0 0 6 9"><path d="M5 1L1.500 4.500 5 8" fill="none" stroke="#bdbdbd" stroke-width="1.600"/></svg>
<svg class="a" style="left:1889.5px;top:1006.5px" width="6" height="9" viewBox="0 0 6 9"><path d="M1 1l3.500 3.500L1 8" fill="none" stroke="#bdbdbd" stroke-width="1.600"/></svg>
<svg class="a" style="left:1905.5px;top:905px" width="9" height="6" viewBox="0 0 9 6"><path d="M1 5l3.500-3.500L8 5" fill="none" stroke="#bdbdbd" stroke-width="1.600"/></svg>
<svg class="a" style="left:1905.5px;top:991px" width="9" height="6" viewBox="0 0 9 6"><path d="M1 1l3.500 3.500L8 1" fill="none" stroke="#bdbdbd" stroke-width="1.600"/></svg>
<div class="a " style="left:0px;top:1021px;width:1920px;height:19px;background:#f0f0f0"></div>
<div class="a " style="left:1362px;top:1023px;width:1px;height:17px;background:#c8c8c8"></div>
<div class="a " style="left:1540px;top:1023px;width:1px;height:17px;background:#c8c8c8"></div>
<div class="a " style="left:1677px;top:1023px;width:1px;height:17px;background:#c8c8c8"></div>
<div class="t " style="left:1367px;top:1024px;font-size:12px;letter-spacing:.1px">Simulation</div>
<div class="t " style="left:1682px;top:1024px;font-size:12px;letter-spacing:0">L:142 C:</div>
<div class="a " style="left:0px;top:1040px;width:1920px;height:40px;background:linear-gradient(90deg,#e6e7ec 0%,#dfe1e8 2.500%,#d4d8e2 18%,#d5d8e2 30%,#dddbe0 35.500%,#d6dae6 42%,#e4e6ef 57%,#e2e4ee 63%,#d9dce8 70%,#dcdfe9 78%,#e2e4ea 88%,#ebece8 96%,#ebece8 100%)"></div>
<svg class="a" style="left:15px;top:1052px" width="17" height="17" viewBox="0 0 17 17"><path d="M0 2.400l7-1v6.600H0zM8 1.300L17 0v8H8zM0 9h7v6.600l-7-1zM8 9h9v8l-9-1.300z" fill="#000"/></svg>
<div class="a " style="left:48.5px;top:1041px;width:287px;height:39px;background:#fff;border:1px solid #cfcfcf"></div>
<svg class="a" style="left:59px;top:1052px" width="18" height="18" viewBox="0 0 18 18"><circle cx="11" cy="6.500" r="5" fill="none" stroke="#111" stroke-width="1.300"/><path d="M7.500 10L1.500 16" stroke="#111" stroke-width="1.500"/></svg>
<div class="t " style="left:87.5px;top:1053px;font-size:14.500px">搜索</div>
<div class="a " style="left:582px;top:1040px;width:48px;height:40px;background:#f2f3f6"></div>
<svg class="a" style="left:349px;top:1048px" width="25" height="25" viewBox="0 0 25 25"><defs><linearGradient id="eg" x1="0" y1="0" x2=".6" y2="1"><stop offset="0" stop-color="#2fa8e8"/><stop offset="1" stop-color="#1458b0"/></linearGradient><linearGradient id="eg2" x1="0" y1="0" x2="1" y2=".3"><stop offset="0" stop-color="#35c1f1"/><stop offset=".55" stop-color="#3ccf9a"/><stop offset="1" stop-color="#6ddc50"/></linearGradient></defs><circle cx="12.500" cy="12.500" r="12.200" fill="url(#eg)"/><path d="M.6 10.500C2 3.500 8 .3 13 .3c7 0 12 5.500 11.800 11.200-.2 3.800-3 5.800-6.800 5.800-2.500 0-4-1-4-2 1.500-1.200 1.800-3.500.3-5.500C12 7.300 7.500 6.300.6 10.500z" fill="url(#eg2)"/><path d="M9.500 10.200C7 13 7.600 18 11.500 21c3.500 2.500 8.500 2 11-1-4.500 2.200-9.800.2-11.300-3.200-.9-2.200-.4-4.300 1.300-5.800-.8-.9-1.800-1.200-3-.8z" fill="#0f4fa0"/><path d="M14.500 15.500c1.200-1.300 1.300-3.300.1-5-1.100-1.500-3.100-2-4.900-.5 2.800-.6 4.600 2.400 3.400 4.800 0 .4.700.9 1.400.7z" fill="#e8edf5"/></svg>
<svg class="a" style="left:398px;top:1048px" width="24" height="24" viewBox="0 0 24 24"><rect width="24" height="24" rx="5" fill="#1ed76d"/><ellipse cx="10" cy="10.500" rx="6" ry="5" fill="#fff"/><ellipse cx="15.500" cy="14.500" rx="5" ry="4" fill="#fff" stroke="#1ed76d" stroke-width=".8"/><circle cx="8" cy="9.500" r=".8" fill="#1ed76d"/><circle cx="12" cy="9.500" r=".8" fill="#1ed76d"/><circle cx="14" cy="14" r=".7" fill="#1ed76d"/><circle cx="17" cy="14" r=".7" fill="#1ed76d"/></svg>
<svg class="a" style="left:447px;top:1048px" width="24" height="24" viewBox="0 0 24 24"><rect width="24" height="24" rx="5.500" fill="#1870f0"/><circle cx="12" cy="12" r="8.500" fill="none" stroke="#fff" stroke-width="1.600"/><path d="M9 7v10M15.500 7L10 12l5.500 5" fill="none" stroke="#fff" stroke-width="2.200"/></svg>
<svg class="a" style="left:496px;top:1048px" width="24" height="24" viewBox="0 0 24 24"><rect width="24" height="24" rx="3" fill="#15171a"/><path d="M1 4l3 2v12l-3 2zM23 4l-3 2v12l3 2z" fill="#1c6a8a"/><path d="M6 6l4 5 2-3 2 3 4-5-1 12-3-5-2 4-2-4-3 5z" fill="#6d737a"/></svg>
<svg class="a" style="left:545px;top:1049px" width="23" height="22" viewBox="0 0 23 22"><path d="M0 2h7l2 2h13v4H0z" fill="#e8a820"/><rect x="0" y="5" width="22.500" height="15" rx="1" fill="#ffd45c"/><path d="M4 20v-7h14v7h-4v-4H8v4z" fill="#3a8ee8"/></svg>
<svg class="a" style="left:593px;top:1048px" width="26" height="26" viewBox="0 0 26 26"><g fill="none" stroke-width="2.200"><path d="M2 3.500h10c6 0 10 4 10 10V24" stroke="#e8306a"/><path d="M2 8h9.500c4 0 6.500 2.500 6.500 6.500V24" stroke="#e8306a"/><path d="M2 12.500h9c2 0 3 1 3 3V24" stroke="#e8306a"/><path d="M3 24v-2.500c0-1.500 1-2.500 2.500-2.500H25" stroke="#1818d8" stroke-width="2"/><path d="M7 23.500h18" stroke="#1818d8" stroke-width="2"/></g></svg>
<svg class="a" style="left:644px;top:1049px" width="22" height="22" viewBox="0 0 22 22"><rect width="22" height="22" rx="2.500" fill="#3b7c3b"/><rect x=".5" y=".5" width="21" height="21" rx="2.500" fill="none" stroke="#2d652d"/><path d="M2.500 2.500h17L11 20.500z" fill="#fff"/><text x="11.500" y="10.500" font-size="10" font-weight="bold" text-anchor="middle" fill="#2d652d" font-family="Liberation Sans">µ</text><text x="17.500" y="20" font-size="8.500" font-weight="bold" font-style="italic" text-anchor="middle" fill="#fff" font-family="Liberation Sans">5</text></svg>
<div class="a " style="left:390px;top:1078px;width:40px;height:2px;background:#0078d7"></div>
<div class="a " style="left:488px;top:1078px;width:40px;height:2px;background:#0078d7"></div>
<div class="a " style="left:537px;top:1078px;width:40px;height:2px;background:#0078d7"></div>
<div class="a " style="left:582px;top:1078px;width:48px;height:2px;background:#0078d7"></div>
<div class="a " style="left:635px;top:1078px;width:40px;height:2px;background:#0078d7"></div>
<div class="t" style="left:1464px;top:1050px;font-size:14.500px;letter-spacing:.1px;line-height:20px;height:20px;width:160px;overflow:hidden"><span style="color:#1e88f0">That sun in my</span><span style="color:#707070"> face (sun in</span></div>
<svg class="a" style="left:1638px;top:1053px" width="15" height="15" viewBox="0 0 15 15"><rect width="15" height="15" rx="3.500" fill="#3a3a3a"/><circle cx="7.500" cy="7.500" r="5" fill="none" stroke="#e8e8e8" stroke-width=".9"/><path d="M6 5v5M9.500 5L6.500 7.500l3 2.500" fill="none" stroke="#e8e8e8" stroke-width="1.100"/></svg>
<svg class="a" style="left:1669px;top:1055px" width="14" height="9" viewBox="0 0 14 9"><path d="M1 7.500l6-6 6 6" fill="none" stroke="#111" stroke-width="1.300"/></svg>
<svg class="a" style="left:1692px;top:1053px" width="17" height="15" viewBox="0 0 17 15"><path d="M3.500 3.500h12v8h-12z" fill="none" stroke="#111" stroke-width="1.100"/><path d="M6 14.500h7M9.500 11.500v3" stroke="#111" stroke-width="1.100"/><rect x=".5" y=".5" width="5" height="4" fill="#dde0e8" stroke="#111"/></svg>
<svg class="a" style="left:1716px;top:1053px" width="18" height="15" viewBox="0 0 18 15"><path d="M1 5.500h3l4-3.500v11l-4-3.500H1z" fill="none" stroke="#111" stroke-width="1.100"/><path d="M10 5.500c1 1 1 3 0 4" fill="none" stroke="#111"/><path d="M12 3.500c2 2 2 6 0 8" fill="none" stroke="#777"/><path d="M14 2c3 3 3 8 0 11" fill="none" stroke="#aaa"/></svg>
<div class="t " style="left:1741px;top:1052.5px;font-size:13px;color:#222;font-weight:300">中</div>
<svg class="a" style="left:1768px;top:1053px" width="17" height="16" viewBox="0 0 25 23"><g transform="rotate(-11 12.500 11.500)"><rect x="2" y="1.500" width="21.500" height="20" rx="3" fill="#f4511e"/><path d="M19.800 6.800C16 4.300 7 4.300 6.500 8c-.5 4 13 2.500 13 7 0 3.800-10 3.800-14 1" stroke="#fff" stroke-width="2.900" fill="none" stroke-linecap="round"/></g></svg>
<div class="t " style="left:1830.5px;top:1042.5px;transform:translateX(-50%);font-size:12.500px;letter-spacing:.1px;color:#222">19:54</div>
<div class="t " style="left:1830.5px;top:1061.5px;transform:translateX(-50%);font-size:12.500px;letter-spacing:.25px;color:#222">2025/12/23</div>
<div class="a " style="left:1915.5px;top:1040px;width:1px;height:40px;background:#a8a8a8"></div>
<svg class="a" style="left:1878px;top:1052px" width="18" height="18" viewBox="0 0 18 18"><path d="M1.500 1.500h15v11h-5v3.500l-3.500-3.500H1.500z" fill="none" stroke="#111" stroke-width="1.200"/></svg>
<div class="a " style="left:1739px;top:1014px;width:181px;height:26px;background:#fff;border:1px solid #b8cce8;border-radius:5px"></div>
<svg class="a" style="left:1719px;top:1010px" width="31" height="29" viewBox="0 0 25 23"><g transform="rotate(-11 12.500 11.500)"><rect x="2" y="1.500" width="21.500" height="20" rx="3" fill="#f4511e"/><path d="M19.800 6.800C16 4.300 7 4.300 6.500 8c-.5 4 13 2.500 13 7 0 3.800-10 3.800-14 1" stroke="#fff" stroke-width="2.900" fill="none" stroke-linecap="round"/></g></svg>
<div class="t " style="left:1755.5px;top:1018.5px;font-size:15px;font-weight:bold;color:#1070e0">中</div>
<svg class="a" style="left:1780px;top:1021px" width="14" height="13" viewBox="0 0 14 13"><circle cx="3.500" cy="3.800" r="1.700" fill="none" stroke="#1070e0" stroke-width="1.400"/><path d="M9.500 6.500a1.400 1.400 0 1 1 1.800 1.300c0 1.500-.8 2.600-2 3.200.7-.8 1-1.600.9-2.400-.5-.3-.8-.8-.7-2.100z" fill="#1070e0"/></svg>
<svg class="a" style="left:1805px;top:1019px" width="12" height="17" viewBox="0 0 12 17"><rect x="3.500" y="0" width="5" height="10" rx="2.500" fill="#1070e0"/><path d="M1 7c0 6 10 6 10 0M6 12v4" fill="none" stroke="#1070e0" stroke-width="1.500"/></svg>
<svg class="a" style="left:1828px;top:1021px" width="16" height="13" viewBox="0 0 16 13"><rect x="0" y="0" width="16" height="13" rx="2.200" fill="#1070e0"/><path d="M2.500 3.500h11M2.500 6.300h11" stroke="#fff" stroke-width="1.500" stroke-dasharray="1.800 1.200"/><path d="M4.500 9.500h7" stroke="#fff" stroke-width="1.500"/></svg>
<svg class="a" style="left:1851px;top:1016px" width="20" height="20" viewBox="0 0 20 20"><defs><linearGradient id="sh" x1="0" y1="0" x2=".3" y2="1"><stop offset="0" stop-color="#f0685a"/><stop offset=".5" stop-color="#a060e8"/><stop offset="1" stop-color="#5cb8ff"/></linearGradient></defs><path d="M1 7l4.500-3c1 1.800 5 1.800 6 0l4.500 3-2 3.200-1.800-1V17.500H4.800V9.200L3 10.200z" fill="url(#sh)"/><circle cx="15.500" cy="3.500" r="2.800" fill="#f4502e"/></svg>
<svg class="a" style="left:1877px;top:1021px" width="14" height="14" viewBox="0 0 14 14"><rect x="0" y="0" width="6" height="6" rx="1.500" fill="#1070e0"/><rect x="8" y="0" width="6" height="6" rx="3" fill="#1070e0"/><rect x="0" y="8" width="6" height="6" rx="1.500" fill="#1070e0"/><rect x="8" y="8" width="6" height="6" rx="1.500" fill="#1070e0"/></svg>
<svg class="a" style="left:1897px;top:1016px" width="22" height="22" viewBox="0 0 22 22"><circle cx="11" cy="11" r="10.500" fill="#fdfdfd" stroke="#f0e4e4"/><path d="M3 8.500c3-1.800 11-2 14.500-.5l-1 4c-2 .5-3.500 2-5 2-2 0-3.500-1.500-7-2z" fill="#f07828"/><path d="M5 9h3.500v1.500H5zM11 9h3v1.500h-3z" fill="#3a2a20"/><path d="M18.500 3l1 2.200 2.200 1-2.200 1-1 2.200-1-2.200-2.200-1 2.200-1z" fill="#f8dc30"/></svg>
</body></html>
